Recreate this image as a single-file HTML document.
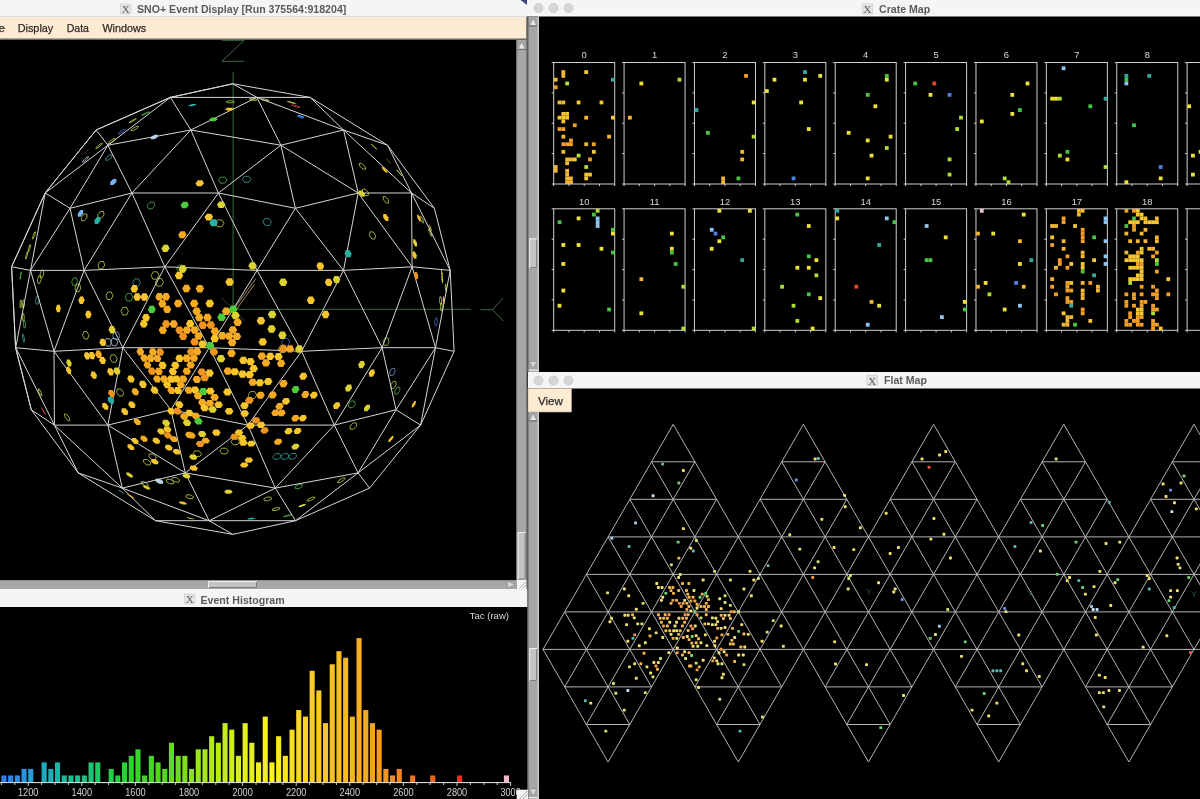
<!DOCTYPE html><html><head><meta charset="utf-8"><style>html,body{margin:0;padding:0;background:#000;width:1200px;height:799px;overflow:hidden}</style></head><body><svg width="1200" height="799" viewBox="0 0 1200 799" style="display:block;will-change:transform">
<rect width="1200" height="799" fill="#000"/>
<rect x="0" y="0" width="527" height="17" fill="#f5f5f5"/>
<rect x="0" y="16" width="527" height="1" fill="#dcdcdc"/>
<rect x="120.6" y="4" width="10.5" height="10" fill="#e4e4e4" stroke="#cfcfcf" stroke-width="0.7"/>
<text x="125.85" y="13" text-anchor="middle" font-family="Liberation Serif, serif" font-size="11" fill="#5c5c5c">X</text>
<text x="137" y="12.6" font-family='"Liberation Sans", sans-serif' font-weight="bold" font-size="10.6" fill="#5a5a5a">SNO+ Event Display [Run 375564:918204]</text>
<rect x="0" y="17" width="527" height="22" fill="#fdebd3"/>
<rect x="0" y="38.5" width="527" height="1.5" fill="#6d655c"/>
<text y="32" font-family='"Liberation Sans", sans-serif' font-size="11.6" fill="#2e2a26"></text>
<text x="-13" y="32" textLength="18" font-family='"Liberation Sans", sans-serif' font-size="11.6" fill="#2e2a26" stroke="#2e2a26" stroke-width="0.25">File</text><text x="17.7" y="32" textLength="35.6" lengthAdjust="spacingAndGlyphs" font-family='"Liberation Sans", sans-serif' font-size="11.6" fill="#2e2a26" stroke="#2e2a26" stroke-width="0.25">Display</text><text x="66.7" y="32" textLength="22.3" lengthAdjust="spacingAndGlyphs" font-family='"Liberation Sans", sans-serif' font-size="11.6" fill="#2e2a26" stroke="#2e2a26" stroke-width="0.25">Data</text><text x="102.4" y="32" textLength="43.8" lengthAdjust="spacingAndGlyphs" font-family='"Liberation Sans", sans-serif' font-size="11.6" fill="#2e2a26" stroke="#2e2a26" stroke-width="0.25">Windows</text>
<clipPath id="spclip"><rect x="0" y="40" width="516.5" height="540"/></clipPath><g clip-path="url(#spclip)">
<path d="M221.7,40.3H244.2L221.7,61.3H244.2" stroke="#3c6a42" stroke-width="1" fill="none"/>
<path d="M233.1,72V309.3H471M480.5,309.7H492.5L503.3,298M492.5,309.7L503.3,321" stroke="#3c6a42" stroke-width="1" fill="none"/>
<path d="M221.7,298L244.5,320.7" stroke="#2c4a30" stroke-width="1" fill="none"/>
<path d="M233.6,309.5L255.8,278.6M235.6,310.5L254.6,284.2" stroke="#c8aa78" stroke-width="0.8" fill="none"/>
<path d="M176.7,268.8L179.0,265.1L183.2,265.1L185.1,268.8L182.9,272.4L178.7,272.4Z" fill="none" stroke="#48a848" stroke-width="0.85"/>
<path d="M151.1,275.5L153.3,271.8L157.3,271.8L159.1,275.5L156.9,279.2L152.9,279.2Z" fill="none" stroke="#b4c440" stroke-width="0.85"/>
<path d="M155.4,282.3L157.6,278.6L161.6,278.6L163.5,282.3L161.3,286.0L157.3,286.0Z" fill="none" stroke="#b4c440" stroke-width="0.85"/>
<path d="M132.7,282.6L134.8,278.9L138.7,278.9L140.4,282.6L138.3,286.3L134.4,286.3Z" fill="none" stroke="#389890" stroke-width="0.85"/>
<path d="M125.3,297.3L127.3,293.5L131.1,293.5L132.9,297.3L130.9,301.0L127.1,301.0Z" fill="none" stroke="#48a848" stroke-width="0.85"/>
<path d="M105.9,295.8L107.8,292.0L111.3,292.0L112.9,295.8L111.0,299.5L107.5,299.5Z" fill="none" stroke="#b4c440" stroke-width="0.85"/>
<path d="M121.0,311.2L122.8,307.4L126.5,307.4L128.4,311.2L126.6,314.9L122.8,314.9Z" fill="none" stroke="#b4c440" stroke-width="0.85"/>
<path d="M97.9,265.1L100.1,261.5L103.5,261.5L104.7,265.1L102.5,268.8L99.1,268.8Z" fill="none" stroke="#b4c440" stroke-width="0.85"/>
<path d="M71.7,281.6L73.5,277.9L76.4,277.9L77.5,281.6L75.7,285.3L72.8,285.3Z" fill="none" stroke="#48a848" stroke-width="0.85"/>
<path d="M74.9,287.9L76.6,284.2L79.6,284.2L80.8,287.9L79.1,291.6L76.1,291.6Z" fill="none" stroke="#b4c440" stroke-width="0.85"/>
<path d="M82.6,335.3L83.8,331.6L87.0,331.6L88.8,335.3L87.6,339.0L84.5,339.0Z" fill="none" stroke="#b4c440" stroke-width="0.85"/>
<path d="M112.6,335.8L114.2,332.0L117.8,332.0L119.9,335.8L118.3,339.5L114.7,339.5Z" fill="none" stroke="#6890c0" stroke-width="0.85"/>
<path d="M110.7,342.0L112.2,338.3L115.7,338.3L117.9,342.0L116.4,345.7L112.8,345.7Z" fill="none" stroke="#a0b8d0" stroke-width="0.85"/>
<path d="M104.6,342.4L106.0,338.7L109.5,338.7L111.6,342.4L110.2,346.1L106.7,346.1Z" fill="none" stroke="#a0b8d0" stroke-width="0.85"/>
<path d="M110.0,358.5L111.3,354.9L114.9,354.9L117.2,358.5L115.9,362.2L112.3,362.2Z" fill="none" stroke="#b4c440" stroke-width="0.85"/>
<path d="M116.5,392.5L117.5,389.0L121.0,389.0L123.6,392.5L122.7,396.0L119.1,396.0Z" fill="none" stroke="#b4c440" stroke-width="0.85"/>
<path d="M281.5,342.1L283.7,338.4L287.9,338.4L289.9,342.1L287.6,345.8L283.4,345.8Z" fill="none" stroke="#4060b0" stroke-width="0.85"/>
<path d="M278.5,348.9L280.8,345.2L285.0,345.2L286.9,348.9L284.6,352.5L280.4,352.5Z" fill="none" stroke="#b4c440" stroke-width="0.85"/>
<path d="M248.1,395.1L250.4,391.6L254.7,391.6L256.7,395.1L254.4,398.5L250.1,398.5Z" fill="none" stroke="#b4c440" stroke-width="0.85"/>
<path d="M348.4,404.4L351.1,401.0L354.5,401.0L355.2,404.4L352.5,407.7L349.1,407.7Z" fill="none" stroke="#48a848" stroke-width="0.85"/>
<path d="M350.0,426.1L353.0,422.9L356.2,422.9L356.5,426.1L353.5,429.2L350.3,429.2Z" fill="none" stroke="#b4c440" stroke-width="0.85"/>
<path d="M288.7,456.3L291.7,453.5L295.7,453.5L296.7,456.3L293.7,459.0L289.8,459.0Z" fill="none" stroke="#389890" stroke-width="0.85"/>
<path d="M280.8,456.5L283.7,453.7L287.8,453.7L289.0,456.5L286.1,459.2L282.0,459.2Z" fill="none" stroke="#389890" stroke-width="0.85"/>
<path d="M272.8,456.5L275.6,453.7L279.8,453.7L281.1,456.5L278.3,459.2L274.2,459.2Z" fill="none" stroke="#389890" stroke-width="0.85"/>
<path d="M230.9,441.7L233.1,438.8L237.5,438.8L239.6,441.7L237.4,444.7L233.1,444.7Z" fill="none" stroke="#b4c440" stroke-width="0.85"/>
<path d="M219.8,451.0L221.8,448.2L226.1,448.2L228.4,451.0L226.4,453.9L222.1,453.9Z" fill="none" stroke="#b4c440" stroke-width="0.85"/>
<path d="M193.2,453.6L194.7,450.9L198.9,450.9L201.6,453.6L200.0,456.4L195.8,456.4Z" fill="none" stroke="#b4c440" stroke-width="0.85"/>
<path d="M295.2,486.5L298.7,484.3L302.3,484.3L302.4,486.5L299.0,488.6L295.3,488.6Z" fill="none" stroke="#48a848" stroke-width="0.85"/>
<path d="M148.8,456.8L149.3,454.0L153.0,454.0L156.2,456.8L155.7,459.5L151.9,459.5Z" fill="none" stroke="#b4c440" stroke-width="0.85"/>
<path d="M143.5,462.2L143.7,459.6L147.3,459.6L150.6,462.2L150.3,464.9L146.8,464.9Z" fill="none" stroke="#b4c440" stroke-width="0.85"/>
<path d="M171.8,479.8L172.4,477.5L176.3,477.5L179.6,479.8L178.9,482.1L175.0,482.1Z" fill="none" stroke="#b4c440" stroke-width="0.85"/>
<path d="M166.3,481.6L166.7,479.4L170.5,479.4L173.9,481.6L173.4,483.8L169.7,483.8Z" fill="none" stroke="#b4c440" stroke-width="0.85"/>
<path d="M155.7,481.2L155.8,479.0L159.4,479.0L162.8,481.2L162.8,483.4L159.2,483.4Z" fill="none" stroke="#b4c440" stroke-width="0.85"/>
<path d="M141.7,483.9L141.1,481.7L144.1,481.7L147.8,483.9L148.4,486.1L145.3,486.1Z" fill="none" stroke="#b4c440" stroke-width="0.85"/>
<path d="M28.5,248.3L29.9,244.7L30.6,244.7L30.0,248.3L28.6,251.9L27.9,251.9Z" fill="none" stroke="#b4c440" stroke-width="0.85"/>
<path d="M26.1,255.4L27.3,251.8L27.9,251.8L27.3,255.4L26.1,259.0L25.5,259.0Z" fill="none" stroke="#b4c440" stroke-width="0.85"/>
<path d="M40.1,273.9L41.5,270.2L43.4,270.2L43.8,273.9L42.3,277.5L40.4,277.5Z" fill="none" stroke="#b4c440" stroke-width="0.85"/>
<path d="M37.5,279.6L38.8,275.9L40.6,275.9L41.1,279.6L39.7,283.3L37.9,283.3Z" fill="none" stroke="#b4c440" stroke-width="0.85"/>
<path d="M20.4,275.5L21.1,271.8L21.4,271.8L20.9,275.5L20.2,279.2L20.0,279.2Z" fill="none" stroke="#48a848" stroke-width="0.85"/>
<path d="M35.5,300.4L36.5,296.6L38.3,296.6L39.1,300.4L38.0,304.1L36.2,304.1Z" fill="none" stroke="#389890" stroke-width="0.85"/>
<path d="M22.4,303.9L23.0,300.2L24.0,300.2L24.4,303.9L23.8,307.7L22.8,307.7Z" fill="none" stroke="#b4c440" stroke-width="0.85"/>
<path d="M20.0,303.9L20.4,300.1L21.1,300.1L21.4,303.9L21.0,307.6L20.2,307.6Z" fill="none" stroke="#b4c440" stroke-width="0.85"/>
<path d="M22.4,317.2L22.7,313.5L23.7,313.5L24.3,317.2L24.0,321.0L23.0,321.0Z" fill="none" stroke="#b4c440" stroke-width="0.85"/>
<path d="M23.4,324.2L23.7,320.5L24.7,320.5L25.5,324.2L25.2,328.0L24.2,328.0Z" fill="none" stroke="#48a848" stroke-width="0.85"/>
<path d="M22.7,338.1L22.6,334.4L23.4,334.4L24.3,338.1L24.4,341.8L23.6,341.8Z" fill="none" stroke="#389890" stroke-width="0.85"/>
<path d="M39.0,392.4L38.1,388.9L39.2,388.9L41.1,392.4L42.0,395.8L41.0,395.8Z" fill="none" stroke="#b4c440" stroke-width="0.85"/>
<path d="M65.2,417.3L64.4,414.1L66.4,414.1L69.1,417.3L69.8,420.6L67.8,420.6Z" fill="none" stroke="#b4c440" stroke-width="0.85"/>
<path d="M43.3,410.8L41.5,407.5L41.6,407.5L43.4,410.8L45.1,414.1L45.1,414.1Z" fill="none" stroke="#c04030" stroke-width="0.85"/>
<path d="M308.3,499.0L312.3,497.2L315.0,497.2L313.8,499.0L309.9,500.8L307.1,500.8Z" fill="none" stroke="#b4c440" stroke-width="0.85"/>
<path d="M263.7,498.9L266.8,497.1L270.9,497.1L271.8,498.9L268.6,500.7L264.5,500.7Z" fill="none" stroke="#b4c440" stroke-width="0.85"/>
<path d="M272.4,509.1L276.1,507.7L279.7,507.7L279.6,509.1L275.9,510.5L272.3,510.5Z" fill="none" stroke="#b4c440" stroke-width="0.85"/>
<path d="M285.9,515.6L290.1,514.6L291.9,514.6L289.5,515.6L285.3,516.6L283.5,516.6Z" fill="none" stroke="#48a848" stroke-width="0.85"/>
<path d="M185.7,496.8L186.4,494.9L190.3,494.9L193.6,496.8L193.0,498.6L189.0,498.6Z" fill="none" stroke="#b4c440" stroke-width="0.85"/>
<path d="M373.9,146.6L371.0,144.1L371.0,144.1L373.9,146.6L376.7,149.1L376.7,149.1Z" fill="none" stroke="#b4c440" stroke-width="0.85"/>
<path d="M290.3,102.5L287.3,101.4L288.3,101.4L292.3,102.5L295.3,103.5L294.3,103.5Z" fill="none" stroke="#b4c440" stroke-width="0.85"/>
<path d="M261.9,99.9L261.2,99.0L264.5,99.0L268.5,99.9L269.2,100.7L265.9,100.7Z" fill="none" stroke="#b4c440" stroke-width="0.85"/>
<path d="M249.2,99.5L249.7,98.6L253.6,98.6L257.1,99.5L256.6,100.3L252.7,100.3Z" fill="none" stroke="#b4c440" stroke-width="0.85"/>
<path d="M293.8,106.2L291.7,105.0L293.8,105.0L297.9,106.2L300.0,107.5L297.9,107.5Z" fill="none" stroke="#c04030" stroke-width="0.85"/>
<path d="M399.0,172.8L396.8,169.9L396.9,169.9L399.4,172.8L401.7,175.7L401.5,175.7Z" fill="none" stroke="#b4c440" stroke-width="0.85"/>
<path d="M359.8,166.3L359.1,163.5L361.7,163.5L365.0,166.3L365.7,169.1L363.1,169.1Z" fill="none" stroke="#b4c440" stroke-width="0.85"/>
<path d="M362.4,192.3L362.4,189.2L365.3,189.2L368.3,192.3L368.3,195.5L365.3,195.5Z" fill="none" stroke="#b4c440" stroke-width="0.85"/>
<path d="M383.5,199.8L383.1,196.6L385.5,196.6L388.3,199.8L388.7,203.0L386.2,203.0Z" fill="none" stroke="#b4c440" stroke-width="0.85"/>
<path d="M420.5,219.4L419.6,216.0L420.7,216.0L422.8,219.4L423.7,222.8L422.6,222.8Z" fill="none" stroke="#b4c440" stroke-width="0.85"/>
<path d="M429.4,232.6L428.5,229.1L429.3,229.1L431.0,232.6L431.9,236.1L431.1,236.1Z" fill="none" stroke="#b4c440" stroke-width="0.85"/>
<path d="M369.4,235.4L370.0,231.9L373.2,231.9L375.6,235.4L374.9,238.9L371.8,238.9Z" fill="none" stroke="#b4c440" stroke-width="0.85"/>
<path d="M242.4,179.3L244.3,176.3L248.7,176.3L251.0,179.3L249.0,182.3L244.7,182.3Z" fill="none" stroke="#389890" stroke-width="0.85"/>
<path d="M218.4,180.2L220.7,177.2L225.0,177.2L227.0,180.2L224.7,183.2L220.4,183.2Z" fill="none" stroke="#48a848" stroke-width="0.85"/>
<path d="M262.9,222.0L264.7,218.6L269.0,218.6L271.4,222.0L269.5,225.4L265.2,225.4Z" fill="none" stroke="#389890" stroke-width="0.85"/>
<path d="M215.3,223.3L217.6,219.9L221.9,219.9L224.0,223.3L221.7,226.7L217.4,226.7Z" fill="none" stroke="#b4c440" stroke-width="0.85"/>
<path d="M226.0,101.8L228.3,100.8L232.6,100.8L234.6,101.8L232.3,102.8L228.0,102.8Z" fill="none" stroke="#90bc3c" stroke-width="0.85"/>
<path d="M106.3,157.6L109.8,154.9L112.3,154.9L111.4,157.6L108.0,160.2L105.5,160.2Z" fill="none" stroke="#389890" stroke-width="0.85"/>
<path d="M147.1,205.5L149.8,202.3L153.7,202.3L154.9,205.5L152.2,208.8L148.3,208.8Z" fill="none" stroke="#48a848" stroke-width="0.85"/>
<path d="M97.7,214.9L100.4,211.5L103.5,211.5L104.0,214.9L101.3,218.3L98.1,218.3Z" fill="none" stroke="#b4c440" stroke-width="0.85"/>
<path d="M81.4,217.4L84.1,214.0L86.9,214.0L87.0,217.4L84.4,220.7L81.6,220.7Z" fill="none" stroke="#b4c440" stroke-width="0.85"/>
<path d="M144.5,113.6L148.4,112.0L149.4,112.0L146.6,113.6L142.7,115.1L141.7,115.1Z" fill="none" stroke="#48a848" stroke-width="0.85"/>
<path d="M132.4,128.5L136.2,126.5L138.6,126.5L137.1,128.5L133.3,130.5L131.0,130.5Z" fill="none" stroke="#b4c440" stroke-width="0.85"/>
<path d="M131.6,120.7L135.3,118.8L136.4,118.8L133.8,120.7L130.1,122.5L129.0,122.5Z" fill="none" stroke="#b4c440" stroke-width="0.85"/>
<path d="M120.1,131.5L123.8,129.4L125.5,129.4L123.6,131.5L119.9,133.7L118.1,133.7Z" fill="none" stroke="#4060b0" stroke-width="0.85"/>
<path d="M109.9,141.2L113.5,138.8L115.4,138.8L113.7,141.2L110.1,143.5L108.2,143.5Z" fill="none" stroke="#b4c440" stroke-width="0.85"/>
<path d="M97.7,145.9L101.1,143.4L102.4,143.4L100.3,145.9L96.9,148.3L95.7,148.3Z" fill="none" stroke="#b4c440" stroke-width="0.85"/>
<path d="M84.3,159.4L87.4,156.7L88.7,156.7L86.9,159.4L83.7,162.1L82.4,162.1Z" fill="none" stroke="#a0b8d0" stroke-width="0.85"/>
<path d="M33.1,235.4L34.8,231.9L35.6,231.9L34.7,235.4L33.0,238.9L32.3,238.9Z" fill="none" stroke="#b4c440" stroke-width="0.85"/>
<path d="M445.4,287.8L445.3,284.1L445.7,284.1L446.3,287.8L446.4,291.5L446.0,291.5Z" fill="none" stroke="#b4c440" stroke-width="0.85"/>
<path d="M439.5,300.5L439.9,296.8L441.0,296.8L441.7,300.5L441.3,304.2L440.2,304.2Z" fill="none" stroke="#b4c440" stroke-width="0.85"/>
<path d="M440.3,306.9L440.8,303.1L441.9,303.1L442.4,306.9L441.9,310.6L440.9,310.6Z" fill="none" stroke="#b4c440" stroke-width="0.85"/>
<path d="M434.7,321.8L435.6,318.0L437.0,318.0L437.4,321.8L436.5,325.5L435.1,325.5Z" fill="none" stroke="#4060b0" stroke-width="0.85"/>
<path d="M383.1,341.7L385.0,338.0L388.0,338.0L389.1,341.7L387.2,345.4L384.2,345.4Z" fill="none" stroke="#90bc3c" stroke-width="0.85"/>
<path d="M389.6,371.9L391.8,368.4L394.6,368.4L395.1,371.9L392.9,375.5L390.1,375.5Z" fill="none" stroke="#6890c0" stroke-width="0.85"/>
<path d="M390.8,384.9L393.2,381.4L395.8,381.4L396.1,384.9L393.7,388.4L391.1,388.4Z" fill="none" stroke="#b4c440" stroke-width="0.85"/>
<path d="M394.9,390.5L397.3,387.0L399.7,387.0L399.8,390.5L397.4,394.0L394.9,394.0Z" fill="none" stroke="#48a848" stroke-width="0.85"/>
<path d="M339.0,480.2L342.7,477.9L345.1,477.9L343.8,480.2L340.1,482.5L337.7,482.5Z" fill="none" stroke="#b4c440" stroke-width="0.85"/>
<path d="M232.8,83.8L256.9,97.4M256.9,97.4L310.2,97.4M232.8,83.8L310.2,97.4M256.9,97.4L343.6,130.0M310.2,97.4L343.6,130.0M343.6,130.0L387.5,145.2M310.2,97.4L387.5,145.2M343.6,130.0L411.5,193.0M387.5,145.2L411.5,193.0M411.5,193.0L434.4,208.3M387.5,145.2L434.4,208.3M256.9,97.4L280.9,145.2M343.6,130.0L280.9,145.2M280.9,145.2L358.2,193.0M343.6,130.0L358.2,193.0M411.5,193.0L358.2,193.0M280.9,145.2L295.4,208.3M358.2,193.0L295.4,208.3M295.4,208.3L343.5,270.4M358.2,193.0L343.5,270.4M343.5,270.4L412.1,266.8M358.2,193.0L412.1,266.8M411.5,193.0L412.1,266.8M412.1,266.8L450.2,270.4M411.5,193.0L450.2,270.4M434.4,208.3L450.2,270.4M343.5,270.4L382.1,347.7M412.1,266.8L382.1,347.7M382.1,347.7L435.5,347.7M412.1,266.8L435.5,347.7M450.2,270.4L435.5,347.7M382.1,347.7L396.1,409.8M435.5,347.7L396.1,409.8M396.1,409.8L420.6,425.1M435.5,347.7L420.6,425.1M420.6,425.1L454.1,351.3M435.5,347.7L454.1,351.3M450.2,270.4L454.1,351.3M232.8,534.4L295.5,520.7M295.5,520.7L369.6,488.1M369.6,488.1L358.1,472.9M295.5,520.7L358.1,472.9M420.6,425.1L369.6,488.1M420.6,425.1L358.1,472.9M396.1,409.8L358.1,472.9M232.8,83.8L170.2,97.4M15.5,347.7L31.3,409.8M232.8,534.4L155.5,520.7M155.5,520.7L78.2,472.9M31.3,409.8L78.2,472.9M170.2,97.4L170.4,97.4M232.8,83.8L170.4,97.4M170.2,97.4L96.1,130.0M170.4,97.4L96.1,130.0M96.1,130.0L107.9,145.2M170.4,97.4L107.9,145.2M96.1,130.0L45.2,193.0M107.9,145.2L45.2,193.0M45.2,193.0L70.0,208.3M107.9,145.2L70.0,208.3M96.1,130.0L45.1,193.0M45.2,193.0L45.1,193.0M45.1,193.0L11.6,266.8M45.2,193.0L11.6,266.8M11.6,266.8L30.5,270.4M45.2,193.0L30.5,270.4M70.0,208.3L30.5,270.4M15.5,347.7L11.6,266.8M15.5,347.7L15.7,347.7M11.6,266.8L15.7,347.7M30.5,270.4L15.7,347.7M31.3,409.8L15.7,347.7M31.3,409.8L54.4,425.1M15.7,347.7L54.4,425.1M54.4,425.1L54.0,351.3M15.7,347.7L54.0,351.3M30.5,270.4L54.0,351.3M54.0,351.3L84.1,270.4M30.5,270.4L84.1,270.4M70.0,208.3L84.1,270.4M54.4,425.1L107.9,425.1M54.0,351.3L107.9,425.1M107.9,425.1L122.8,347.7M54.0,351.3L122.8,347.7M84.1,270.4L122.8,347.7M107.9,425.1L170.9,409.8M122.8,347.7L170.9,409.8M232.8,534.4L209.1,520.7M155.5,520.7L209.1,520.7M209.1,520.7L122.3,488.1M155.5,520.7L122.3,488.1M78.2,472.9L122.3,488.1M54.4,425.1L122.3,488.1M78.2,472.9L54.4,425.1M209.1,520.7L185.3,472.9M122.3,488.1L185.3,472.9M107.9,425.1L185.3,472.9M107.9,425.1L122.3,488.1M170.9,409.8L185.3,472.9M256.9,97.4L170.4,97.4M170.4,97.4L190.8,130.0M256.9,97.4L190.8,130.0M280.9,145.2L190.8,130.0M190.8,130.0L218.4,193.0M280.9,145.2L218.4,193.0M295.4,208.3L218.4,193.0M107.9,145.2L190.8,130.0M107.9,145.2L131.9,193.0M190.8,130.0L131.9,193.0M218.4,193.0L131.9,193.0M70.0,208.3L131.9,193.0M84.1,270.4L131.9,193.0M84.1,270.4L164.8,266.8M131.9,193.0L164.8,266.8M218.4,193.0L164.8,266.8M164.8,266.8L257.1,270.4M218.4,193.0L257.1,270.4M295.4,208.3L257.1,270.4M122.8,347.7L164.8,266.8M122.8,347.7L209.3,347.7M164.8,266.8L209.3,347.7M257.1,270.4L209.3,347.7M170.9,409.8L209.3,347.7M170.9,409.8L247.9,425.1M209.3,347.7L247.9,425.1M247.9,425.1L301.6,351.3M209.3,347.7L301.6,351.3M257.1,270.4L301.6,351.3M343.5,270.4L301.6,351.3M343.5,270.4L257.1,270.4M247.9,425.1L334.3,425.1M301.6,351.3L334.3,425.1M382.1,347.7L334.3,425.1M382.1,347.7L301.6,351.3M396.1,409.8L334.3,425.1M295.5,520.7L209.1,520.7M295.5,520.7L275.3,488.1M209.1,520.7L275.3,488.1M185.3,472.9L275.3,488.1M247.9,425.1L275.3,488.1M185.3,472.9L247.9,425.1M358.1,472.9L275.3,488.1M358.1,472.9L334.3,425.1M334.3,425.1L275.3,488.1" stroke="#d6d6d6" stroke-width="1" fill="none" stroke-linejoin="round"/>
<path d="M169.6,248.4L167.9,244.8L163.8,244.8L161.4,248.4L163.1,252.0L167.2,252.0Z" fill="#dcd232"/>
<path d="M186.9,269.0L185.0,265.3L180.8,265.3L178.5,269.0L180.4,272.7L184.6,272.7Z" fill="#dcd232"/>
<path d="M183.2,275.5L181.3,271.8L177.1,271.8L174.8,275.5L176.8,279.2L181.0,279.2Z" fill="#f7c52c"/>
<path d="M190.6,288.5L188.6,284.7L184.4,284.7L182.2,288.5L184.2,292.2L188.4,292.2Z" fill="#f5aa24"/>
<path d="M204.1,288.6L202.0,284.9L197.8,284.9L195.6,288.6L197.7,292.4L201.9,292.4Z" fill="#f5aa24"/>
<path d="M138.2,288.7L136.4,284.9L132.6,284.9L130.5,288.7L132.3,292.4L136.1,292.4Z" fill="#f7c52c"/>
<path d="M141.1,297.0L139.3,293.3L135.4,293.3L133.4,297.0L135.2,300.8L139.1,300.8Z" fill="#f7c52c"/>
<path d="M148.3,297.0L146.4,293.2L142.5,293.2L140.4,297.0L142.3,300.7L146.2,300.7Z" fill="#f7c52c"/>
<path d="M163.4,296.9L161.5,293.1L157.4,293.1L155.3,296.9L157.3,300.6L161.3,300.6Z" fill="#f5aa24"/>
<path d="M170.1,296.9L168.1,293.1L164.0,293.1L161.9,296.9L163.9,300.6L168.0,300.6Z" fill="#f5aa24"/>
<path d="M166.4,303.8L164.4,300.1L160.3,300.1L158.3,303.8L160.3,307.6L164.4,307.6Z" fill="#f5aa24"/>
<path d="M182.3,303.5L180.2,299.7L176.0,299.7L173.9,303.5L176.0,307.2L180.1,307.2Z" fill="#f5aa24"/>
<path d="M198.4,303.5L196.3,299.8L192.1,299.8L189.9,303.5L192.0,307.2L196.3,307.2Z" fill="#f5aa24"/>
<path d="M155.8,309.4L153.8,305.7L149.8,305.7L147.8,309.4L149.8,313.1L153.8,313.1Z" fill="#4ccc3c"/>
<path d="M171.3,309.4L169.2,305.7L165.1,305.7L163.1,309.4L165.1,313.1L169.2,313.1Z" fill="#f5aa24"/>
<path d="M201.0,311.2L198.8,307.5L194.6,307.5L192.4,311.2L194.6,315.0L198.8,315.0Z" fill="#f5aa24"/>
<path d="M150.0,317.6L147.9,313.9L144.0,313.9L142.1,317.6L144.1,321.4L148.1,321.4Z" fill="#f7c52c"/>
<path d="M147.7,323.9L145.6,320.1L141.7,320.1L139.8,323.9L141.9,327.6L145.8,327.6Z" fill="#f7c52c"/>
<path d="M170.2,324.0L168.1,320.2L164.0,320.2L162.0,324.0L164.1,327.7L168.2,327.7Z" fill="#f09420"/>
<path d="M177.9,324.0L175.7,320.2L171.6,320.2L169.6,324.0L171.7,327.7L175.9,327.7Z" fill="#f5aa24"/>
<path d="M194.4,323.9L192.2,320.1L188.0,320.1L185.9,323.9L188.1,327.6L192.3,327.6Z" fill="#f7c52c"/>
<path d="M203.5,317.6L201.4,313.8L197.1,313.8L195.0,317.6L197.1,321.3L201.4,321.3Z" fill="#f5aa24"/>
<path d="M166.9,330.2L164.7,326.5L160.6,326.5L158.7,330.2L160.9,333.9L164.9,333.9Z" fill="#f5aa24"/>
<path d="M183.7,330.1L181.5,326.4L177.3,326.4L175.3,330.1L177.5,333.9L181.7,333.9Z" fill="#f09420"/>
<path d="M191.2,330.1L189.0,326.4L184.7,326.4L182.7,330.1L184.9,333.8L189.1,333.8Z" fill="#f5aa24"/>
<path d="M198.8,330.0L196.6,326.3L192.4,326.3L190.3,330.0L192.5,333.7L196.8,333.7Z" fill="#f5aa24"/>
<path d="M187.3,336.2L185.1,332.5L180.9,332.5L178.9,336.2L181.1,339.9L185.3,339.9Z" fill="#f09420"/>
<path d="M202.9,336.0L200.6,332.2L196.4,332.2L194.3,336.0L196.5,339.7L200.8,339.7Z" fill="#f5aa24"/>
<path d="M198.8,341.9L196.6,338.2L192.3,338.2L190.3,341.9L192.5,345.6L196.8,345.6Z" fill="#f09420"/>
<path d="M84.6,300.3L83.1,296.6L80.1,296.6L78.4,300.3L79.8,304.1L82.9,304.1Z" fill="#f7c52c"/>
<path d="M60.8,308.5L59.6,304.7L57.0,304.7L55.8,308.5L57.0,312.2L59.6,312.2Z" fill="#f7c52c"/>
<path d="M91.6,314.5L89.9,310.7L86.7,310.7L85.2,314.5L86.8,318.2L90.0,318.2Z" fill="#f7c52c"/>
<path d="M115.6,329.7L113.6,326.0L110.1,326.0L108.5,329.7L110.5,333.5L114.0,333.5Z" fill="#dcd232"/>
<path d="M106.2,342.4L104.1,338.7L100.7,338.7L99.4,342.4L101.4,346.1L104.8,346.1Z" fill="#f7c52c"/>
<path d="M90.1,355.8L88.0,352.2L84.9,352.2L83.9,355.8L86.0,359.5L89.1,359.5Z" fill="#f7c52c"/>
<path d="M95.2,355.6L93.0,351.9L89.8,351.9L88.7,355.6L90.9,359.2L94.1,359.2Z" fill="#f7c52c"/>
<path d="M101.9,354.2L99.8,350.5L96.4,350.5L95.3,354.2L97.4,357.9L100.8,357.9Z" fill="#f5aa24"/>
<path d="M105.9,360.3L103.7,356.7L100.3,356.7L99.1,360.3L101.4,364.0L104.8,364.0Z" fill="#f7c52c"/>
<path d="M71.7,363.0L69.6,359.4L66.9,359.4L66.3,363.0L68.4,366.6L71.1,366.6Z" fill="#dcd232"/>
<path d="M71.3,370.4L69.1,366.8L66.5,366.8L66.1,370.4L68.2,373.9L70.8,373.9Z" fill="#f7c52c"/>
<path d="M97.0,375.2L94.6,371.6L91.4,371.6L90.6,375.2L93.0,378.7L96.2,378.7Z" fill="#f7c52c"/>
<path d="M114.0,371.8L111.6,368.2L108.2,368.2L107.1,371.8L109.5,375.4L112.9,375.4Z" fill="#f7c52c"/>
<path d="M120.6,371.0L118.2,367.4L114.6,367.4L113.4,371.0L115.8,374.6L119.4,374.6Z" fill="#dcd232"/>
<path d="M134.7,378.9L132.2,375.4L128.4,375.4L127.2,378.9L129.7,382.4L133.4,382.4Z" fill="#f7c52c"/>
<path d="M144.3,351.7L142.0,348.0L138.1,348.0L136.5,351.7L138.8,355.4L142.6,355.4Z" fill="#f5aa24"/>
<path d="M156.9,352.0L154.6,348.3L150.6,348.3L148.9,352.0L151.1,355.6L155.1,355.6Z" fill="#f5aa24"/>
<path d="M164.2,352.1L161.9,348.4L157.8,348.4L156.1,352.1L158.3,355.7L162.4,355.7Z" fill="#f09420"/>
<path d="M148.2,358.1L145.9,354.4L141.9,354.4L140.3,358.1L142.7,361.7L146.6,361.7Z" fill="#f5aa24"/>
<path d="M154.6,358.2L152.2,354.6L148.3,354.6L146.6,358.2L148.9,361.9L152.9,361.9Z" fill="#f5aa24"/>
<path d="M161.4,358.4L159.1,354.7L155.0,354.7L153.3,358.4L155.7,362.0L159.7,362.0Z" fill="#f5aa24"/>
<path d="M151.4,365.0L149.0,361.4L145.1,361.4L143.5,365.0L145.9,368.6L149.8,368.6Z" fill="#f5aa24"/>
<path d="M166.7,365.3L164.3,361.7L160.2,361.7L158.5,365.3L160.9,368.9L165.0,368.9Z" fill="#f7c52c"/>
<path d="M179.5,365.3L177.2,361.7L173.0,361.7L171.2,365.3L173.6,368.9L177.7,368.9Z" fill="#f7c52c"/>
<path d="M155.9,371.2L153.4,367.6L149.5,367.6L147.9,371.2L150.3,374.8L154.3,374.8Z" fill="#f09420"/>
<path d="M162.8,371.4L160.4,367.8L156.4,367.8L154.7,371.4L157.2,375.0L161.2,375.0Z" fill="#f5aa24"/>
<path d="M177.0,371.5L174.6,367.9L170.5,367.9L168.8,371.5L171.1,375.0L175.3,375.0Z" fill="#f7c52c"/>
<path d="M183.7,358.4L181.3,354.7L177.2,354.7L175.3,358.4L177.6,362.0L181.8,362.0Z" fill="#f7c52c"/>
<path d="M191.0,358.2L188.7,354.6L184.4,354.6L182.5,358.2L184.8,361.9L189.0,361.9Z" fill="#f5aa24"/>
<path d="M198.1,358.1L195.8,354.4L191.6,354.4L189.6,358.1L191.9,361.7L196.1,361.7Z" fill="#f5aa24"/>
<path d="M195.4,351.8L193.1,348.2L188.9,348.2L186.9,351.8L189.2,355.5L193.4,355.5Z" fill="#f09420"/>
<path d="M201.4,351.7L199.2,348.0L194.9,348.0L192.9,351.7L195.2,355.3L199.4,355.3Z" fill="#f5aa24"/>
<path d="M194.9,365.0L192.6,361.4L188.3,361.4L186.4,365.0L188.7,368.6L193.0,368.6Z" fill="#f5aa24"/>
<path d="M191.0,371.3L188.6,367.7L184.4,367.7L182.6,371.3L184.9,374.8L189.1,374.8Z" fill="#f5aa24"/>
<path d="M122.2,491.7L118.7,489.8L117.8,489.8L120.5,491.7L124.1,493.7L124.9,493.7Z" fill="#2ab0a0"/>
<path d="M131.8,496.1L128.1,494.3L126.9,494.3L129.4,496.1L133.2,498.0L134.3,498.0Z" fill="#f7c52c"/>
<path d="M186.5,503.0L182.9,501.4L179.3,501.4L179.2,503.0L182.9,504.6L186.5,504.6Z" fill="#f7c52c"/>
<path d="M192.9,518.5L188.7,517.6L186.5,517.6L188.5,518.5L192.7,519.3L195.0,519.3Z" fill="#dcd232"/>
<path d="M304.8,505.4L306.1,503.9L303.5,503.9L299.5,505.4L298.1,506.9L300.8,506.9Z" fill="#dcd232"/>
<path d="M255.3,518.5L254.7,517.7L250.7,517.7L247.3,518.5L247.9,519.4L251.9,519.4Z" fill="#2ab0a0"/>
<path d="M256.9,265.9L254.6,262.3L250.3,262.3L248.3,265.9L250.5,269.6L254.8,269.6Z" fill="#dcd232"/>
<path d="M233.9,282.0L231.8,278.3L227.5,278.3L225.3,282.0L227.4,285.7L231.8,285.7Z" fill="#f7c52c"/>
<path d="M287.4,282.2L285.2,278.5L281.0,278.5L279.0,282.2L281.2,285.9L285.4,285.9Z" fill="#dcd232"/>
<path d="M324.2,266.1L322.0,262.4L318.0,262.4L316.4,266.1L318.6,269.7L322.6,269.7Z" fill="#f7c52c"/>
<path d="M351.7,253.7L349.3,250.1L345.7,250.1L344.5,253.7L346.8,257.3L350.4,257.3Z" fill="#2ab0a0"/>
<path d="M332.6,282.4L330.4,278.7L326.6,278.7L324.8,282.4L327.0,286.1L330.8,286.1Z" fill="#f7c52c"/>
<path d="M340.3,279.6L338.2,275.9L334.4,275.9L332.8,279.6L334.9,283.3L338.7,283.3Z" fill="#dcd232"/>
<path d="M314.8,300.2L312.8,296.5L308.7,296.5L306.8,300.2L308.8,304.0L312.9,304.0Z" fill="#f7c52c"/>
<path d="M329.5,314.6L327.6,310.8L323.7,310.8L321.7,314.6L323.6,318.3L327.5,318.3Z" fill="#f7c52c"/>
<path d="M214.1,303.6L212.0,299.8L207.7,299.8L205.5,303.6L207.6,307.3L211.9,307.3Z" fill="#f7c52c"/>
<path d="M230.6,311.2L228.4,307.4L224.1,307.4L221.9,311.2L224.1,314.9L228.4,314.9Z" fill="#f5aa24"/>
<path d="M237.5,309.4L235.4,305.6L231.1,305.6L228.9,309.4L231.1,313.1L235.4,313.1Z" fill="#4ccc3c"/>
<path d="M225.9,317.4L223.7,313.6L219.4,313.6L217.3,317.4L219.4,321.1L223.8,321.1Z" fill="#4ccc3c"/>
<path d="M239.8,315.6L237.6,311.9L233.3,311.9L231.1,315.6L233.3,319.3L237.6,319.3Z" fill="#dcd232"/>
<path d="M211.8,317.5L209.6,313.8L205.3,313.8L203.2,317.5L205.4,321.2L209.7,321.2Z" fill="#f5aa24"/>
<path d="M242.0,322.3L239.8,318.5L235.5,318.5L233.3,322.3L235.5,326.0L239.8,326.0Z" fill="#f5aa24"/>
<path d="M207.1,325.2L204.9,321.4L200.6,321.4L198.5,325.2L200.7,328.9L205.0,328.9Z" fill="#f09420"/>
<path d="M215.1,325.0L212.9,321.3L208.6,321.3L206.5,325.0L208.7,328.8L213.0,328.8Z" fill="#f09420"/>
<path d="M219.2,331.3L217.1,327.6L212.7,327.6L210.6,331.3L212.8,335.1L217.1,335.1Z" fill="#f5aa24"/>
<path d="M226.6,335.8L224.4,332.1L220.1,332.1L218.0,335.8L220.2,339.5L224.5,339.5Z" fill="#f5aa24"/>
<path d="M233.4,336.1L231.2,332.4L226.9,332.4L224.7,336.1L226.9,339.8L231.2,339.8Z" fill="#f5aa24"/>
<path d="M241.2,336.4L239.0,332.7L234.7,332.7L232.5,336.4L234.7,340.1L239.0,340.1Z" fill="#f5aa24"/>
<path d="M237.2,329.9L235.0,326.2L230.7,326.2L228.5,329.9L230.7,333.7L235.0,333.7Z" fill="#f5aa24"/>
<path d="M219.0,338.6L216.8,334.9L212.5,334.9L210.4,338.6L212.6,342.3L216.9,342.3Z" fill="#f7c52c"/>
<path d="M236.4,342.5L234.3,338.8L230.0,338.8L227.8,342.5L230.0,346.2L234.3,346.2Z" fill="#f5aa24"/>
<path d="M206.8,344.2L204.6,340.5L200.3,340.5L198.2,344.2L200.5,347.9L204.7,347.9Z" fill="#f7c52c"/>
<path d="M214.5,345.6L212.3,341.9L208.0,341.9L205.9,345.6L208.1,349.3L212.4,349.3Z" fill="#4ccc3c"/>
<path d="M265.2,320.8L263.1,317.0L258.8,317.0L256.7,320.8L258.8,324.5L263.1,324.5Z" fill="#f7c52c"/>
<path d="M276.4,314.6L274.3,310.8L270.0,310.8L267.9,314.6L270.0,318.3L274.2,318.3Z" fill="#dcd232"/>
<path d="M275.9,328.9L273.8,325.2L269.6,325.2L267.4,328.9L269.4,332.7L273.7,332.7Z" fill="#dcd232"/>
<path d="M286.6,335.3L284.6,331.6L280.4,331.6L278.2,335.3L280.2,339.0L284.4,339.0Z" fill="#dcd232"/>
<path d="M267.0,341.9L264.9,338.2L260.6,338.2L258.4,341.9L260.5,345.6L264.8,345.6Z" fill="#f7c52c"/>
<path d="M287.4,348.9L285.5,345.2L281.3,345.2L279.0,348.9L280.9,352.6L285.1,352.6Z" fill="#f09420"/>
<path d="M294.2,349.0L292.3,345.3L288.1,345.3L285.9,349.0L287.8,352.6L291.9,352.6Z" fill="#f5aa24"/>
<path d="M303.3,349.0L301.5,345.3L297.4,345.3L295.1,349.0L296.9,352.7L301.0,352.7Z" fill="#dcd232"/>
<path d="M218.2,352.0L216.0,348.3L211.7,348.3L209.6,352.0L211.8,355.6L216.1,355.6Z" fill="#f09420"/>
<path d="M235.8,353.3L233.6,349.6L229.3,349.6L227.2,353.3L229.3,356.9L233.7,356.9Z" fill="#f5aa24"/>
<path d="M225.3,358.7L223.1,355.0L218.7,355.0L216.6,358.7L218.8,362.3L223.2,362.3Z" fill="#dcd232"/>
<path d="M247.7,360.3L245.6,356.7L241.3,356.7L239.1,360.3L241.2,364.0L245.5,364.0Z" fill="#f7c52c"/>
<path d="M254.8,361.7L252.7,358.0L248.4,358.0L246.2,361.7L248.3,365.3L252.6,365.3Z" fill="#f7c52c"/>
<path d="M266.1,356.2L264.1,352.5L259.8,352.5L257.6,356.2L259.6,359.8L263.9,359.8Z" fill="#f5aa24"/>
<path d="M274.4,356.5L272.4,352.8L268.2,352.8L265.9,356.5L267.9,360.1L272.1,360.1Z" fill="#f7c52c"/>
<path d="M282.7,356.7L280.7,353.0L276.5,353.0L274.2,356.7L276.2,360.3L280.4,360.3Z" fill="#f7c52c"/>
<path d="M270.3,363.0L268.3,359.3L264.0,359.3L261.7,363.0L263.7,366.6L268.0,366.6Z" fill="#f5aa24"/>
<path d="M285.3,363.4L283.4,359.8L279.2,359.8L276.9,363.4L278.8,367.0L283.0,367.0Z" fill="#f5aa24"/>
<path d="M258.0,368.7L255.9,365.1L251.6,365.1L249.4,368.7L251.4,372.3L255.7,372.3Z" fill="#f7c52c"/>
<path d="M232.2,371.1L230.0,367.5L225.7,367.5L223.5,371.1L225.7,374.7L230.0,374.7Z" fill="#f5aa24"/>
<path d="M239.0,371.7L236.9,368.2L232.6,368.2L230.4,371.7L232.5,375.3L236.9,375.3Z" fill="#f7c52c"/>
<path d="M246.8,374.1L244.7,370.6L240.4,370.6L238.2,374.1L240.3,377.7L244.6,377.7Z" fill="#f7c52c"/>
<path d="M253.9,374.7L251.9,371.1L247.6,371.1L245.3,374.7L247.4,378.2L251.7,378.2Z" fill="#f7c52c"/>
<path d="M206.1,372.0L203.8,368.4L199.5,368.4L197.5,372.0L199.8,375.6L204.1,375.6Z" fill="#f09420"/>
<path d="M213.9,373.1L211.6,369.5L207.3,369.5L205.3,373.1L207.6,376.7L211.8,376.7Z" fill="#f7c52c"/>
<path d="M208.9,377.8L206.6,374.2L202.4,374.2L200.4,377.8L202.7,381.3L207.0,381.3Z" fill="#f09420"/>
<path d="M257.0,382.2L254.9,378.7L250.6,378.7L248.4,382.2L250.4,385.7L254.7,385.7Z" fill="#f5aa24"/>
<path d="M264.1,382.7L262.2,379.2L257.9,379.2L255.6,382.7L257.6,386.2L261.8,386.2Z" fill="#f7c52c"/>
<path d="M272.5,381.4L270.5,377.9L266.3,377.9L263.9,381.4L265.8,384.9L270.1,384.9Z" fill="#f7c52c"/>
<path d="M287.7,383.6L285.9,380.1L281.8,380.1L279.3,383.6L281.1,387.2L285.3,387.2Z" fill="#f5aa24"/>
<path d="M307.3,376.3L305.7,372.7L301.7,372.7L299.2,376.3L300.8,379.8L304.9,379.8Z" fill="#f7c52c"/>
<path d="M365.0,364.6L363.9,361.0L360.5,361.0L358.2,364.6L359.3,368.2L362.7,368.2Z" fill="#dcd232"/>
<path d="M375.0,373.1L374.2,369.6L371.0,369.6L368.6,373.1L369.5,376.7L372.7,376.7Z" fill="#f7c52c"/>
<path d="M161.1,379.0L158.7,375.5L154.7,375.5L153.1,379.0L155.6,382.5L159.6,382.5Z" fill="#f5aa24"/>
<path d="M168.2,379.1L165.7,375.6L161.7,375.6L160.1,379.1L162.5,382.7L166.6,382.7Z" fill="#f5aa24"/>
<path d="M175.3,379.1L172.9,375.6L168.8,375.6L167.1,379.1L169.5,382.7L173.6,382.7Z" fill="#f7c52c"/>
<path d="M180.9,379.1L178.5,375.6L174.4,375.6L172.6,379.1L175.0,382.6L179.2,382.6Z" fill="#f7c52c"/>
<path d="M187.4,379.0L185.0,375.5L180.8,375.5L179.0,379.0L181.4,382.5L185.6,382.5Z" fill="#f5aa24"/>
<path d="M201.1,379.5L198.8,376.0L194.5,376.0L192.6,379.5L195.0,383.1L199.2,383.1Z" fill="#f5aa24"/>
<path d="M114.9,393.5L112.3,390.0L108.9,390.0L108.1,393.5L110.7,396.9L114.1,396.9Z" fill="#f09420"/>
<path d="M114.3,400.2L111.6,396.8L108.2,396.8L107.5,400.2L110.2,403.6L113.6,403.6Z" fill="#2ab0a0"/>
<path d="M108.5,406.4L105.8,403.0L102.5,403.0L102.1,406.4L104.8,409.7L108.0,409.7Z" fill="#f7c52c"/>
<path d="M135.6,404.7L132.9,401.4L129.2,401.4L128.2,404.7L130.9,408.1L134.6,408.1Z" fill="#f7c52c"/>
<path d="M128.3,411.6L125.5,408.3L121.9,408.3L121.2,411.6L124.0,414.9L127.5,414.9Z" fill="#f7c52c"/>
<path d="M139.0,391.7L136.4,388.3L132.7,388.3L131.5,391.7L134.1,395.2L137.8,395.2Z" fill="#f5aa24"/>
<path d="M146.8,384.3L144.3,380.8L140.4,380.8L139.0,384.3L141.6,387.9L145.4,387.9Z" fill="#f7c52c"/>
<path d="M158.5,390.3L155.9,386.8L152.0,386.8L150.5,390.3L153.1,393.8L157.1,393.8Z" fill="#f7c52c"/>
<path d="M171.2,384.7L168.8,381.2L164.7,381.2L163.1,384.7L165.5,388.3L169.6,388.3Z" fill="#f7c52c"/>
<path d="M184.9,384.7L182.5,381.2L178.3,381.2L176.6,384.7L179.0,388.2L183.2,388.2Z" fill="#f5aa24"/>
<path d="M175.5,390.5L173.0,387.0L168.9,387.0L167.3,390.5L169.8,394.0L173.9,394.0Z" fill="#f5aa24"/>
<path d="M182.0,390.5L179.6,387.0L175.4,387.0L173.7,390.5L176.2,393.9L180.3,393.9Z" fill="#f7c52c"/>
<path d="M192.9,390.2L190.5,386.7L186.3,386.7L184.5,390.2L186.9,393.7L191.1,393.7Z" fill="#f5aa24"/>
<path d="M199.4,390.0L197.0,386.5L192.7,386.5L190.9,390.0L193.3,393.5L197.5,393.5Z" fill="#f7c52c"/>
<path d="M202.2,395.8L199.8,392.3L195.5,392.3L193.7,395.8L196.0,399.2L200.3,399.2Z" fill="#f5aa24"/>
<path d="M183.5,404.7L181.0,401.3L176.8,401.3L175.2,404.7L177.7,408.1L181.9,408.1Z" fill="#f7c52c"/>
<path d="M175.3,411.2L172.7,407.9L168.6,407.9L167.2,411.2L169.8,414.5L173.9,414.5Z" fill="#f7c52c"/>
<path d="M181.7,411.1L179.1,407.8L175.0,407.8L173.4,411.1L176.0,414.4L180.2,414.4Z" fill="#f09420"/>
<path d="M193.6,413.0L191.1,409.7L186.9,409.7L185.2,413.0L187.7,416.3L191.9,416.3Z" fill="#f7c52c"/>
<path d="M200.2,416.0L197.7,412.7L193.4,412.7L191.7,416.0L194.2,419.2L198.4,419.2Z" fill="#f5aa24"/>
<path d="M188.3,416.5L185.7,413.3L181.6,413.3L180.0,416.5L182.5,419.8L186.7,419.8Z" fill="#f5aa24"/>
<path d="M191.2,422.7L188.6,419.5L184.4,419.5L182.8,422.7L185.4,425.9L189.6,425.9Z" fill="#dcd232"/>
<path d="M193.4,434.9L190.8,431.8L186.6,431.8L185.1,434.9L187.7,437.9L191.9,437.9Z" fill="#f5aa24"/>
<path d="M141.0,421.8L138.1,418.7L134.4,418.7L133.6,421.8L136.5,425.0L140.2,425.0Z" fill="#f5aa24"/>
<path d="M170.2,422.9L167.5,419.7L163.4,419.7L162.1,422.9L164.9,426.0L168.9,426.0Z" fill="#dcd232"/>
<path d="M165.0,431.4L162.2,428.4L158.2,428.4L157.1,431.4L160.0,434.5L163.9,434.5Z" fill="#f7c52c"/>
<path d="M171.4,429.3L168.7,426.2L164.6,426.2L163.4,429.3L166.2,432.4L170.2,432.4Z" fill="#f7c52c"/>
<path d="M138.6,440.9L135.5,438.0L132.0,438.0L131.5,440.9L134.6,443.9L138.1,443.9Z" fill="#f7c52c"/>
<path d="M147.7,438.8L144.6,435.8L140.9,435.8L140.3,438.8L143.3,441.8L147.0,441.8Z" fill="#f5aa24"/>
<path d="M134.3,447.2L131.1,444.3L127.7,444.3L127.5,447.2L130.7,450.1L134.1,450.1Z" fill="#f7c52c"/>
<path d="M160.2,440.8L157.2,437.8L153.3,437.8L152.4,440.8L155.4,443.7L159.3,443.7Z" fill="#f7c52c"/>
<path d="M171.9,435.4L169.1,432.3L165.1,432.3L163.9,435.4L166.7,438.4L170.8,438.4Z" fill="#f09420"/>
<path d="M178.0,439.2L175.2,436.2L171.1,436.2L169.9,439.2L172.7,442.1L176.7,442.1Z" fill="#f5aa24"/>
<path d="M172.7,447.7L169.8,444.8L165.8,444.8L164.8,447.7L167.7,450.6L171.7,450.6Z" fill="#f7c52c"/>
<path d="M180.8,451.8L177.9,449.0L173.8,449.0L172.7,451.8L175.6,454.6L179.6,454.6Z" fill="#f7c52c"/>
<path d="M158.5,461.7L155.2,459.0L151.5,459.0L151.0,461.7L154.3,464.3L158.0,464.3Z" fill="#f7c52c"/>
<path d="M132.4,475.0L128.8,472.6L126.0,472.6L126.8,475.0L130.3,477.4L133.2,477.4Z" fill="#dcd232"/>
<path d="M162.8,481.1L159.3,478.9L155.8,478.9L155.7,481.1L159.2,483.4L162.7,483.4Z" fill="#b8d4f0"/>
<path d="M149.7,487.5L145.9,485.4L142.9,485.4L143.7,487.5L147.4,489.6L150.4,489.6Z" fill="#dcd232"/>
<path d="M190.5,475.9L187.5,473.5L183.4,473.5L182.4,475.9L185.4,478.2L189.5,478.2Z" fill="#dcd232"/>
<path d="M207.7,391.5L205.3,388.1L201.0,388.1L199.1,391.5L201.5,395.0L205.7,395.0Z" fill="#4ccc3c"/>
<path d="M214.7,391.2L212.4,387.7L208.1,387.7L206.1,391.2L208.4,394.6L212.7,394.6Z" fill="#f7c52c"/>
<path d="M218.9,397.3L216.6,393.9L212.3,393.9L210.3,397.3L212.6,400.7L216.9,400.7Z" fill="#f5aa24"/>
<path d="M206.6,402.5L204.2,399.1L200.0,399.1L198.1,402.5L200.5,405.9L204.7,405.9Z" fill="#f5aa24"/>
<path d="M214.2,403.2L211.9,399.9L207.6,399.9L205.6,403.2L208.0,406.6L212.3,406.6Z" fill="#f5aa24"/>
<path d="M222.9,404.7L220.6,401.4L216.3,401.4L214.3,404.7L216.5,408.1L220.8,408.1Z" fill="#f7c52c"/>
<path d="M208.8,407.9L206.4,404.6L202.1,404.6L200.2,407.9L202.6,411.2L206.9,411.2Z" fill="#f7c52c"/>
<path d="M216.8,409.5L214.5,406.2L210.2,406.2L208.2,409.5L210.6,412.8L214.9,412.8Z" fill="#dcd232"/>
<path d="M231.8,392.1L229.6,388.6L225.3,388.6L223.1,392.1L225.3,395.5L229.7,395.5Z" fill="#f7c52c"/>
<path d="M233.5,411.2L231.3,407.9L226.9,407.9L224.8,411.2L227.0,414.5L231.3,414.5Z" fill="#f7c52c"/>
<path d="M253.7,400.4L251.6,397.0L247.3,397.0L245.0,400.4L247.1,403.8L251.4,403.8Z" fill="#f09420"/>
<path d="M248.8,405.6L246.8,402.3L242.5,402.3L240.2,405.6L242.3,408.9L246.6,408.9Z" fill="#f7c52c"/>
<path d="M249.0,413.5L247.0,410.2L242.6,410.2L240.4,413.5L242.4,416.8L246.7,416.8Z" fill="#f7c52c"/>
<path d="M264.8,395.2L262.9,391.8L258.6,391.8L256.2,395.2L258.2,398.7L262.5,398.7Z" fill="#f5aa24"/>
<path d="M276.9,395.1L275.1,391.6L270.8,391.6L268.4,395.1L270.2,398.5L274.5,398.5Z" fill="#f5aa24"/>
<path d="M290.1,401.2L288.4,397.9L284.3,397.9L281.8,401.2L283.4,404.6L287.6,404.6Z" fill="#f7c52c"/>
<path d="M283.7,406.4L282.0,403.1L277.8,403.1L275.3,406.4L277.0,409.7L281.2,409.7Z" fill="#f5aa24"/>
<path d="M279.6,412.8L277.9,409.5L273.7,409.5L271.2,412.8L272.9,416.1L277.1,416.1Z" fill="#f5aa24"/>
<path d="M285.7,413.0L284.1,409.7L279.9,409.7L277.4,413.0L279.0,416.2L283.2,416.2Z" fill="#f5aa24"/>
<path d="M299.6,389.6L298.0,386.1L293.9,386.1L291.4,389.6L293.0,393.1L297.1,393.1Z" fill="#4ccc3c"/>
<path d="M309.4,394.6L307.9,391.1L303.9,391.1L301.3,394.6L302.8,398.0L306.8,398.0Z" fill="#f5aa24"/>
<path d="M317.8,395.1L316.4,391.7L312.5,391.7L309.9,395.1L311.3,398.5L315.2,398.5Z" fill="#f7c52c"/>
<path d="M299.4,418.3L298.0,415.0L293.9,415.0L291.3,418.3L292.7,421.5L296.7,421.5Z" fill="#f5aa24"/>
<path d="M306.9,418.1L305.6,414.9L301.6,414.9L298.9,418.1L300.2,421.3L304.2,421.3Z" fill="#f7c52c"/>
<path d="M352.1,388.1L351.1,384.6L347.6,384.6L345.0,388.1L346.0,391.6L349.5,391.6Z" fill="#dcd232"/>
<path d="M340.3,405.6L339.4,402.3L335.8,402.3L333.0,405.6L333.9,408.9L337.6,408.9Z" fill="#f7c52c"/>
<path d="M370.1,408.0L369.8,404.7L366.7,404.7L363.9,408.0L364.3,411.3L367.4,411.3Z" fill="#dcd232"/>
<path d="M260.3,420.4L258.4,417.2L254.1,417.2L251.7,420.4L253.6,423.6L257.9,423.6Z" fill="#f09420"/>
<path d="M254.9,425.7L252.9,422.5L248.6,422.5L246.3,425.7L248.2,428.8L252.5,428.8Z" fill="#f7c52c"/>
<path d="M265.3,424.9L263.5,421.7L259.2,421.7L256.8,424.9L258.6,428.0L262.9,428.0Z" fill="#f7c52c"/>
<path d="M268.8,430.4L267.1,427.3L262.8,427.3L260.3,430.4L262.1,433.5L266.3,433.5Z" fill="#f09420"/>
<path d="M202.7,421.3L200.2,418.1L196.0,418.1L194.2,421.3L196.7,424.4L201.0,424.4Z" fill="#4ccc3c"/>
<path d="M220.7,432.6L218.3,429.5L214.0,429.5L212.1,432.6L214.4,435.7L218.7,435.7Z" fill="#f7c52c"/>
<path d="M243.3,432.6L241.2,429.5L236.9,429.5L234.6,432.6L236.7,435.7L241.0,435.7Z" fill="#f7c52c"/>
<path d="M238.7,436.8L236.6,433.8L232.2,433.8L230.1,436.8L232.2,439.8L236.5,439.8Z" fill="#f09420"/>
<path d="M246.5,437.9L244.4,434.9L240.1,434.9L237.8,437.9L239.9,440.9L244.2,440.9Z" fill="#f7c52c"/>
<path d="M247.7,442.7L245.6,439.8L241.3,439.8L239.0,442.7L241.0,445.7L245.4,445.7Z" fill="#f7c52c"/>
<path d="M255.6,443.7L253.7,440.7L249.4,440.7L247.0,443.7L248.9,446.6L253.2,446.6Z" fill="#f7c52c"/>
<path d="M206.4,434.0L203.9,431.0L199.7,431.0L197.9,434.0L200.4,437.1L204.7,437.1Z" fill="#dcd232"/>
<path d="M195.8,435.6L193.2,432.5L189.0,432.5L187.4,435.6L190.0,438.6L194.2,438.6Z" fill="#f5aa24"/>
<path d="M209.9,440.7L207.4,437.7L203.1,437.7L201.4,440.7L203.9,443.6L208.1,443.6Z" fill="#f5aa24"/>
<path d="M204.3,444.0L201.7,441.1L197.5,441.1L195.8,444.0L198.4,447.0L202.6,447.0Z" fill="#f09420"/>
<path d="M292.6,431.2L291.2,428.1L287.1,428.1L284.4,431.2L285.8,434.3L289.9,434.3Z" fill="#f7c52c"/>
<path d="M301.6,431.1L300.4,428.0L296.4,428.0L293.6,431.1L294.8,434.1L298.8,434.1Z" fill="#f7c52c"/>
<path d="M282.3,441.8L280.8,438.8L276.7,438.8L273.9,441.8L275.4,444.7L279.6,444.7Z" fill="#f5aa24"/>
<path d="M299.4,446.6L298.3,443.7L294.3,443.7L291.4,446.6L292.5,449.5L296.5,449.5Z" fill="#dcd232"/>
<path d="M253.1,460.2L251.2,457.5L246.9,457.5L244.5,460.2L246.4,462.8L250.7,462.8Z" fill="#f7c52c"/>
<path d="M248.6,465.0L246.6,462.4L242.3,462.4L239.9,465.0L241.9,467.6L246.2,467.6Z" fill="#f7c52c"/>
<path d="M197.4,457.1L194.7,454.4L190.5,454.4L189.0,457.1L191.8,459.8L196.0,459.8Z" fill="#dcd232"/>
<path d="M197.9,468.1L195.0,465.6L190.9,465.6L189.5,468.1L192.4,470.7L196.5,470.7Z" fill="#f7c52c"/>
<path d="M232.7,491.7L230.5,489.8L226.1,489.8L224.1,491.7L226.4,493.7L230.7,493.7Z" fill="#dcd232"/>
<path d="M195.8,105.1L196.2,103.9L192.7,103.9L188.9,105.1L188.5,106.3L192.0,106.3Z" fill="#2ab0a0"/>
<path d="M233.8,109.2L231.7,107.8L227.4,107.8L225.1,109.2L227.1,110.6L231.4,110.6Z" fill="#f7c52c"/>
<path d="M217.6,119.4L216.1,117.6L211.8,117.6L209.1,119.4L210.6,121.2L214.8,121.2Z" fill="#4ccc3c"/>
<path d="M157.8,137.0L157.9,134.7L154.5,134.7L150.9,137.0L150.8,139.2L154.3,139.2Z" fill="#b8d4f0"/>
<path d="M116.4,182.0L116.4,179.0L113.2,179.0L110.2,182.0L110.2,185.1L113.3,185.1Z" fill="#78b4f0"/>
<path d="M204.0,183.2L202.3,180.2L198.0,180.2L195.5,183.2L197.2,186.2L201.4,186.2Z" fill="#f7c52c"/>
<path d="M83.2,213.5L83.2,210.1L80.5,210.1L77.9,213.5L77.9,216.8L80.5,216.8Z" fill="#78b4f0"/>
<path d="M100.5,220.5L100.0,217.1L96.9,217.1L94.3,220.5L94.8,223.9L97.9,223.9Z" fill="#2ab0a0"/>
<path d="M188.9,205.0L187.3,201.7L183.1,201.7L180.5,205.0L182.2,208.2L186.3,208.2Z" fill="#4ccc3c"/>
<path d="M225.5,204.7L223.5,201.4L219.2,201.4L216.9,204.7L218.9,208.0L223.3,208.0Z" fill="#dcd232"/>
<path d="M213.1,217.1L211.2,213.8L206.9,213.8L204.5,217.1L206.5,220.5L210.8,220.5Z" fill="#f7c52c"/>
<path d="M217.9,222.7L215.9,219.3L211.6,219.3L209.3,222.7L211.3,226.2L215.6,226.2Z" fill="#2ab0a0"/>
<path d="M186.5,234.8L184.8,231.3L180.6,231.3L178.2,234.8L179.9,238.3L184.1,238.3Z" fill="#f5aa24"/>
<path d="M292.5,102.5L288.5,101.5L287.5,101.5L290.6,102.5L294.6,103.6L295.5,103.6Z" fill="#f7c52c"/>
<path d="M295.0,103.1L291.2,102.0L290.7,102.0L294.0,103.1L297.8,104.2L298.3,104.2Z" fill="#2ab0a0"/>
<path d="M303.6,116.5L299.8,114.9L296.7,114.9L297.5,116.5L301.4,118.2L304.5,118.2Z" fill="#3c78e6"/>
<path d="M389.1,161.2L386.4,158.5L386.1,158.5L388.6,161.2L391.3,163.9L391.5,163.9Z" fill="#f7c52c"/>
<path d="M386.4,170.0L383.3,167.1L381.7,167.1L383.1,170.0L386.2,172.8L387.8,172.8Z" fill="#f7c52c"/>
<path d="M416.7,197.3L414.7,194.1L414.6,194.1L416.5,197.3L418.5,200.5L418.6,200.5Z" fill="#f7c52c"/>
<path d="M364.8,193.6L361.9,190.4L358.8,190.4L358.7,193.6L361.7,196.7L364.7,196.7Z" fill="#dcd232"/>
<path d="M388.5,217.5L385.9,214.1L383.2,214.1L383.2,217.5L385.7,220.9L388.4,220.9Z" fill="#f7c52c"/>
<path d="M420.2,218.2L418.1,214.8L416.8,214.8L417.6,218.2L419.8,221.6L421.1,221.6Z" fill="#f7c52c"/>
<path d="M431.0,227.8L429.3,224.4L428.8,224.4L429.9,227.8L431.6,231.3L432.1,231.3Z" fill="#f7c52c"/>
<path d="M86.6,151.5L89.3,149.0L89.1,149.0L86.3,151.5L83.6,154.1L83.8,154.1Z" fill="#f7c52c"/>
<path d="M417.0,242.8L415.0,239.2L413.1,239.2L413.1,242.8L415.1,246.4L417.1,246.4Z" fill="#dcd232"/>
<path d="M416.7,255.2L414.8,251.6L412.7,251.6L412.4,255.2L414.3,258.8L416.4,258.8Z" fill="#f7c52c"/>
<path d="M418.3,275.6L416.7,271.9L414.5,271.9L414.0,275.6L415.5,279.3L417.7,279.3Z" fill="#f09420"/>
<path d="M442.7,273.8L441.7,270.1L441.0,270.1L441.2,273.8L442.2,277.5L442.9,277.5Z" fill="#dcd232"/>
<path d="M443.0,279.6L442.1,275.9L441.3,275.9L441.4,279.6L442.3,283.3L443.1,283.3Z" fill="#dcd232"/>
<path d="M444.5,300.4L443.9,296.6L443.1,296.6L442.8,300.4L443.4,304.1L444.2,304.1Z" fill="#f7c52c"/>
<path d="M415.3,404.3L416.1,400.9L414.6,400.9L412.3,404.3L411.5,407.6L413.0,407.6Z" fill="#f7c52c"/>
<path d="M392.6,439.0L393.8,436.0L392.2,436.0L389.2,439.0L388.0,442.0L389.7,442.0Z" fill="#f7c52c"/>
<path d="M398.1,446.8L400.5,443.9L400.4,443.9L397.9,446.8L395.6,449.7L395.7,449.7Z" fill="#f7c52c"/>
</g>
<rect x="516.5" y="40" width="10.5" height="540" fill="#a6a6a6"/>
<rect x="516.5" y="40" width="0.8" height="540" fill="#8c8c8c"/>
<rect x="526.2" y="17" width="1.3" height="572" fill="#6a6a6a"/>
<path d="M518.1,49.0L521.7,42.0L525.3000000000001,49.0Z" fill="#e6e6e6" stroke="#7a7a7a" stroke-width="0.5"/>
<rect x="517.7" y="49.0" width="8" height="1" fill="#6a6a6a"/>
<rect x="517.6" y="532" width="8.0" height="47.5" fill="#c4c4c4"/>
<path d="M518.1,579.5V532.5H525.6" stroke="#f0f0f0" stroke-width="1" fill="none"/>
<path d="M518.6,579.0H525.1V533" stroke="#7c7c7c" stroke-width="1" fill="none"/>
<rect x="0" y="580" width="516.5" height="9" fill="#a6a6a6"/>
<rect x="0" y="580" width="516.5" height="0.8" fill="#8c8c8c"/>
<rect x="208" y="581" width="49" height="7" fill="#c4c4c4"/>
<path d="M208.5,588V581.5H257" stroke="#f0f0f0" stroke-width="1" fill="none"/>
<path d="M209,587.5H256.5V582" stroke="#7c7c7c" stroke-width="1" fill="none"/>
<path d="M507.5,581.0L515.0,584.5L507.5,588.0Z" fill="#d8d8d8" stroke="#7a7a7a" stroke-width="0.5"/>
<rect x="516.5" y="580" width="10" height="9" fill="#f4f4f4"/>
<path d="M519.5,588.5L526,582M522.5,588.5L526,585" stroke="#9a9a9a" stroke-width="0.8"/>
<path d="M520.5,0H533.5L527,5Z" fill="#3a4a78"/>
<rect x="0" y="589" width="528" height="18" fill="#f5f5f5"/>
<rect x="184.5" y="594" width="10.5" height="10" fill="#e4e4e4" stroke="#cfcfcf" stroke-width="0.7"/>
<text x="189.75" y="603" text-anchor="middle" font-family="Liberation Serif, serif" font-size="11" fill="#5c5c5c">X</text>
<text x="200.5" y="603.5" font-family='"Liberation Sans", sans-serif' font-weight="bold" font-size="10.6" fill="#5a5a5a">Event Histogram</text>
<rect x="1.40" y="775.46" width="5.1" height="6.54" fill="#327df0"/>
<rect x="8.10" y="775.46" width="5.1" height="6.54" fill="#2d86ea"/>
<rect x="14.80" y="775.46" width="5.1" height="6.54" fill="#288ee4"/>
<rect x="21.50" y="768.92" width="5.1" height="13.08" fill="#2397dd"/>
<rect x="28.20" y="768.92" width="5.1" height="13.08" fill="#1ea0d7"/>
<rect x="41.60" y="762.38" width="5.1" height="19.62" fill="#1eaabe"/>
<rect x="48.30" y="768.92" width="5.1" height="13.08" fill="#1eafb2"/>
<rect x="55.00" y="762.38" width="5.1" height="19.62" fill="#1eb4a5"/>
<rect x="61.70" y="775.46" width="5.1" height="6.54" fill="#1eb79d"/>
<rect x="68.40" y="775.46" width="5.1" height="6.54" fill="#1ebb94"/>
<rect x="75.10" y="775.46" width="5.1" height="6.54" fill="#1ebe8c"/>
<rect x="81.80" y="775.46" width="5.1" height="6.54" fill="#1ec17f"/>
<rect x="88.50" y="762.38" width="5.1" height="19.62" fill="#1ec571"/>
<rect x="95.20" y="762.38" width="5.1" height="19.62" fill="#1ec864"/>
<rect x="108.60" y="768.92" width="5.1" height="13.08" fill="#23ce4b"/>
<rect x="115.30" y="775.46" width="5.1" height="6.54" fill="#26d13e"/>
<rect x="122.00" y="762.38" width="5.1" height="19.62" fill="#28d432"/>
<rect x="128.70" y="755.84" width="5.1" height="26.16" fill="#30d42f"/>
<rect x="135.40" y="749.30" width="5.1" height="32.70" fill="#37d52b"/>
<rect x="142.10" y="775.46" width="5.1" height="6.54" fill="#3ed628"/>
<rect x="148.80" y="755.84" width="5.1" height="26.16" fill="#46d625"/>
<rect x="155.50" y="762.38" width="5.1" height="19.62" fill="#4ed621"/>
<rect x="162.20" y="768.92" width="5.1" height="13.08" fill="#55d71e"/>
<rect x="168.90" y="742.76" width="5.1" height="39.24" fill="#62da1e"/>
<rect x="175.60" y="755.84" width="5.1" height="26.16" fill="#70dc1e"/>
<rect x="182.30" y="755.84" width="5.1" height="26.16" fill="#7dde1e"/>
<rect x="189.00" y="768.92" width="5.1" height="13.08" fill="#8ae11e"/>
<rect x="195.70" y="749.30" width="5.1" height="32.70" fill="#98e41e"/>
<rect x="202.40" y="749.30" width="5.1" height="32.70" fill="#a5e61e"/>
<rect x="209.10" y="736.22" width="5.1" height="45.78" fill="#afe81e"/>
<rect x="215.80" y="742.76" width="5.1" height="39.24" fill="#b9e91e"/>
<rect x="222.50" y="723.14" width="5.1" height="58.86" fill="#c3eb1e"/>
<rect x="229.20" y="729.68" width="5.1" height="52.32" fill="#cded1e"/>
<rect x="235.90" y="755.84" width="5.1" height="26.16" fill="#d7ee1e"/>
<rect x="242.60" y="723.14" width="5.1" height="58.86" fill="#e1f01e"/>
<rect x="249.30" y="742.76" width="5.1" height="39.24" fill="#e7f01f"/>
<rect x="256.00" y="762.38" width="5.1" height="19.62" fill="#eef020"/>
<rect x="262.70" y="716.60" width="5.1" height="65.40" fill="#f4f022"/>
<rect x="269.40" y="762.38" width="5.1" height="19.62" fill="#faf023"/>
<rect x="276.10" y="736.22" width="5.1" height="45.78" fill="#faea23"/>
<rect x="282.80" y="755.84" width="5.1" height="26.16" fill="#fae423"/>
<rect x="289.50" y="729.68" width="5.1" height="52.32" fill="#fade23"/>
<rect x="296.20" y="710.06" width="5.1" height="71.94" fill="#fad923"/>
<rect x="302.90" y="716.60" width="5.1" height="65.40" fill="#fad323"/>
<rect x="309.60" y="670.82" width="5.1" height="111.18" fill="#facd23"/>
<rect x="316.30" y="690.44" width="5.1" height="91.56" fill="#fac923"/>
<rect x="323.00" y="723.14" width="5.1" height="58.86" fill="#f9c523"/>
<rect x="329.70" y="664.28" width="5.1" height="117.72" fill="#f9c023"/>
<rect x="336.40" y="651.20" width="5.1" height="130.80" fill="#f9bc23"/>
<rect x="343.10" y="657.74" width="5.1" height="124.26" fill="#f8b823"/>
<rect x="349.80" y="716.60" width="5.1" height="65.40" fill="#f8b423"/>
<rect x="356.50" y="638.12" width="5.1" height="143.88" fill="#f7ae23"/>
<rect x="363.20" y="710.06" width="5.1" height="71.94" fill="#f6a823"/>
<rect x="369.90" y="723.14" width="5.1" height="58.86" fill="#f4a223"/>
<rect x="376.60" y="729.68" width="5.1" height="52.32" fill="#f39c23"/>
<rect x="383.30" y="768.92" width="5.1" height="13.08" fill="#f29623"/>
<rect x="390.00" y="775.46" width="5.1" height="6.54" fill="#f18e23"/>
<rect x="396.70" y="768.92" width="5.1" height="13.08" fill="#f08623"/>
<rect x="410.10" y="775.46" width="5.1" height="6.54" fill="#ee7623"/>
<rect x="430.20" y="775.46" width="5.1" height="6.54" fill="#ec6423"/>
<rect x="457.00" y="775.46" width="5.1" height="6.54" fill="#e6321e"/>
<rect x="503.90" y="775.46" width="5.1" height="6.54" fill="#f2b4c8"/>
<rect x="0" y="782.0" width="511" height="1.1" fill="#d8d8d8"/>
<rect x="0.90" y="783.0" width="1" height="2" fill="#c8c8c8"/>
<rect x="14.30" y="783.0" width="1" height="2" fill="#c8c8c8"/>
<rect x="27.70" y="783.0" width="1" height="3" fill="#c8c8c8"/>
<rect x="41.10" y="783.0" width="1" height="2" fill="#c8c8c8"/>
<rect x="54.50" y="783.0" width="1" height="2" fill="#c8c8c8"/>
<rect x="67.90" y="783.0" width="1" height="2" fill="#c8c8c8"/>
<rect x="81.30" y="783.0" width="1" height="3" fill="#c8c8c8"/>
<rect x="94.70" y="783.0" width="1" height="2" fill="#c8c8c8"/>
<rect x="108.10" y="783.0" width="1" height="2" fill="#c8c8c8"/>
<rect x="121.50" y="783.0" width="1" height="2" fill="#c8c8c8"/>
<rect x="134.90" y="783.0" width="1" height="3" fill="#c8c8c8"/>
<rect x="148.30" y="783.0" width="1" height="2" fill="#c8c8c8"/>
<rect x="161.70" y="783.0" width="1" height="2" fill="#c8c8c8"/>
<rect x="175.10" y="783.0" width="1" height="2" fill="#c8c8c8"/>
<rect x="188.50" y="783.0" width="1" height="3" fill="#c8c8c8"/>
<rect x="201.90" y="783.0" width="1" height="2" fill="#c8c8c8"/>
<rect x="215.30" y="783.0" width="1" height="2" fill="#c8c8c8"/>
<rect x="228.70" y="783.0" width="1" height="2" fill="#c8c8c8"/>
<rect x="242.10" y="783.0" width="1" height="3" fill="#c8c8c8"/>
<rect x="255.50" y="783.0" width="1" height="2" fill="#c8c8c8"/>
<rect x="268.90" y="783.0" width="1" height="2" fill="#c8c8c8"/>
<rect x="282.30" y="783.0" width="1" height="2" fill="#c8c8c8"/>
<rect x="295.70" y="783.0" width="1" height="3" fill="#c8c8c8"/>
<rect x="309.10" y="783.0" width="1" height="2" fill="#c8c8c8"/>
<rect x="322.50" y="783.0" width="1" height="2" fill="#c8c8c8"/>
<rect x="335.90" y="783.0" width="1" height="2" fill="#c8c8c8"/>
<rect x="349.30" y="783.0" width="1" height="3" fill="#c8c8c8"/>
<rect x="362.70" y="783.0" width="1" height="2" fill="#c8c8c8"/>
<rect x="376.10" y="783.0" width="1" height="2" fill="#c8c8c8"/>
<rect x="389.50" y="783.0" width="1" height="2" fill="#c8c8c8"/>
<rect x="402.90" y="783.0" width="1" height="3" fill="#c8c8c8"/>
<rect x="416.30" y="783.0" width="1" height="2" fill="#c8c8c8"/>
<rect x="429.70" y="783.0" width="1" height="2" fill="#c8c8c8"/>
<rect x="443.10" y="783.0" width="1" height="2" fill="#c8c8c8"/>
<rect x="456.50" y="783.0" width="1" height="3" fill="#c8c8c8"/>
<rect x="469.90" y="783.0" width="1" height="2" fill="#c8c8c8"/>
<rect x="483.30" y="783.0" width="1" height="2" fill="#c8c8c8"/>
<rect x="496.70" y="783.0" width="1" height="2" fill="#c8c8c8"/>
<rect x="510.10" y="783.0" width="1" height="3" fill="#c8c8c8"/>
<text x="18.00" y="795.5" textLength="20.4" lengthAdjust="spacingAndGlyphs" font-family='"Liberation Sans", sans-serif' font-size="10.2" fill="#d4d4d4">1200</text>
<text x="71.60" y="795.5" textLength="20.4" lengthAdjust="spacingAndGlyphs" font-family='"Liberation Sans", sans-serif' font-size="10.2" fill="#d4d4d4">1400</text>
<text x="125.20" y="795.5" textLength="20.4" lengthAdjust="spacingAndGlyphs" font-family='"Liberation Sans", sans-serif' font-size="10.2" fill="#d4d4d4">1600</text>
<text x="178.80" y="795.5" textLength="20.4" lengthAdjust="spacingAndGlyphs" font-family='"Liberation Sans", sans-serif' font-size="10.2" fill="#d4d4d4">1800</text>
<text x="232.40" y="795.5" textLength="20.4" lengthAdjust="spacingAndGlyphs" font-family='"Liberation Sans", sans-serif' font-size="10.2" fill="#d4d4d4">2000</text>
<text x="286.00" y="795.5" textLength="20.4" lengthAdjust="spacingAndGlyphs" font-family='"Liberation Sans", sans-serif' font-size="10.2" fill="#d4d4d4">2200</text>
<text x="339.60" y="795.5" textLength="20.4" lengthAdjust="spacingAndGlyphs" font-family='"Liberation Sans", sans-serif' font-size="10.2" fill="#d4d4d4">2400</text>
<text x="393.20" y="795.5" textLength="20.4" lengthAdjust="spacingAndGlyphs" font-family='"Liberation Sans", sans-serif' font-size="10.2" fill="#d4d4d4">2600</text>
<text x="446.80" y="795.5" textLength="20.4" lengthAdjust="spacingAndGlyphs" font-family='"Liberation Sans", sans-serif' font-size="10.2" fill="#d4d4d4">2800</text>
<text x="500.40" y="795.5" textLength="20.4" lengthAdjust="spacingAndGlyphs" font-family='"Liberation Sans", sans-serif' font-size="10.2" fill="#d4d4d4">3000</text>
<text x="469.6" y="619" font-family='"Liberation Sans", sans-serif' font-size="9.6" fill="#d8d8d8">Tac (raw)</text>
<rect x="527" y="0" width="673" height="16" fill="#f5f5f5"/>
<rect x="527" y="15" width="673" height="1.5" fill="#fafafa"/>
<circle cx="538.5" cy="8" r="4.5" fill="#d6d6d6" stroke="#c6c6c6" stroke-width="0.8"/>
<circle cx="553.5" cy="8" r="4.5" fill="#d6d6d6" stroke="#c6c6c6" stroke-width="0.8"/>
<circle cx="568.5" cy="8" r="4.5" fill="#d6d6d6" stroke="#c6c6c6" stroke-width="0.8"/>
<rect x="862.3" y="4" width="10.5" height="10" fill="#e4e4e4" stroke="#cfcfcf" stroke-width="0.7"/>
<text x="867.55" y="13" text-anchor="middle" font-family="Liberation Serif, serif" font-size="11" fill="#5c5c5c">X</text>
<text x="879" y="12.6" font-family='"Liberation Sans", sans-serif' font-weight="bold" font-size="10.6" fill="#5a5a5a">Crate Map</text>
<rect x="527.5" y="16.5" width="11.5" height="355.5" fill="#a6a6a6"/>
<rect x="527.3" y="16.5" width="1.2" height="355.5" fill="#5c5c5c"/>
<rect x="537.6" y="16.5" width="1.2" height="355.5" fill="#d4d4d4"/>
<path d="M529.6,25.5L533.2,18.5L536.8000000000001,25.5Z" fill="#e6e6e6" stroke="#7a7a7a" stroke-width="0.5"/>
<rect x="529.2" y="25.5" width="8" height="1" fill="#6a6a6a"/>
<path d="M529.6,361.5L533.2,368.5L536.8000000000001,361.5Z" fill="#d8d8d8" stroke="#7a7a7a" stroke-width="0.5"/>
<rect x="528.7" y="369.5" width="9" height="1.2" fill="#eeeeee"/>
<rect x="529.2" y="238.3" width="8.0" height="29.80000000000001" fill="#c4c4c4"/>
<path d="M529.7,268.1V238.8H537.2" stroke="#f0f0f0" stroke-width="1" fill="none"/>
<path d="M530.2,267.6H536.7V239.3" stroke="#7c7c7c" stroke-width="1" fill="none"/>
<clipPath id="cmclip"><rect x="539" y="16.5" width="661" height="355.5"/></clipPath>
<g clip-path="url(#cmclip)">
<rect x="553.70" y="62.50" width="61.0" height="121.5" fill="none" stroke="#cfcfcf" stroke-width="1"/>
<path d="M551.7,62.5H553.7M553.7,184.0V186.0M551.7,92.9H553.7M569.0,184.0V186.0M551.7,123.2H553.7M584.2,184.0V186.0M551.7,153.6H553.7M599.5,184.0V186.0M551.7,184.0H553.7M614.7,184.0V186.0" stroke="#cfcfcf" stroke-width="1" fill="none"/>
<text x="584.20" y="58.20" text-anchor="middle" font-family='"Liberation Sans", sans-serif' font-size="9.4" fill="#dadada">0</text>
<rect x="624.08" y="62.50" width="61.0" height="121.5" fill="none" stroke="#cfcfcf" stroke-width="1"/>
<path d="M622.1,62.5H624.1M624.1,184.0V186.0M622.1,92.9H624.1M639.3,184.0V186.0M622.1,123.2H624.1M654.6,184.0V186.0M622.1,153.6H624.1M669.8,184.0V186.0M622.1,184.0H624.1M685.1,184.0V186.0" stroke="#cfcfcf" stroke-width="1" fill="none"/>
<text x="654.58" y="58.20" text-anchor="middle" font-family='"Liberation Sans", sans-serif' font-size="9.4" fill="#dadada">1</text>
<rect x="694.46" y="62.50" width="61.0" height="121.5" fill="none" stroke="#cfcfcf" stroke-width="1"/>
<path d="M692.5,62.5H694.5M694.5,184.0V186.0M692.5,92.9H694.5M709.7,184.0V186.0M692.5,123.2H694.5M725.0,184.0V186.0M692.5,153.6H694.5M740.2,184.0V186.0M692.5,184.0H694.5M755.5,184.0V186.0" stroke="#cfcfcf" stroke-width="1" fill="none"/>
<text x="724.96" y="58.20" text-anchor="middle" font-family='"Liberation Sans", sans-serif' font-size="9.4" fill="#dadada">2</text>
<rect x="764.84" y="62.50" width="61.0" height="121.5" fill="none" stroke="#cfcfcf" stroke-width="1"/>
<path d="M762.8,62.5H764.8M764.8,184.0V186.0M762.8,92.9H764.8M780.1,184.0V186.0M762.8,123.2H764.8M795.3,184.0V186.0M762.8,153.6H764.8M810.6,184.0V186.0M762.8,184.0H764.8M825.8,184.0V186.0" stroke="#cfcfcf" stroke-width="1" fill="none"/>
<text x="795.34" y="58.20" text-anchor="middle" font-family='"Liberation Sans", sans-serif' font-size="9.4" fill="#dadada">3</text>
<rect x="835.22" y="62.50" width="61.0" height="121.5" fill="none" stroke="#cfcfcf" stroke-width="1"/>
<path d="M833.2,62.5H835.2M835.2,184.0V186.0M833.2,92.9H835.2M850.5,184.0V186.0M833.2,123.2H835.2M865.7,184.0V186.0M833.2,153.6H835.2M881.0,184.0V186.0M833.2,184.0H835.2M896.2,184.0V186.0" stroke="#cfcfcf" stroke-width="1" fill="none"/>
<text x="865.72" y="58.20" text-anchor="middle" font-family='"Liberation Sans", sans-serif' font-size="9.4" fill="#dadada">4</text>
<rect x="905.60" y="62.50" width="61.0" height="121.5" fill="none" stroke="#cfcfcf" stroke-width="1"/>
<path d="M903.6,62.5H905.6M905.6,184.0V186.0M903.6,92.9H905.6M920.9,184.0V186.0M903.6,123.2H905.6M936.1,184.0V186.0M903.6,153.6H905.6M951.4,184.0V186.0M903.6,184.0H905.6M966.6,184.0V186.0" stroke="#cfcfcf" stroke-width="1" fill="none"/>
<text x="936.10" y="58.20" text-anchor="middle" font-family='"Liberation Sans", sans-serif' font-size="9.4" fill="#dadada">5</text>
<rect x="975.98" y="62.50" width="61.0" height="121.5" fill="none" stroke="#cfcfcf" stroke-width="1"/>
<path d="M974.0,62.5H976.0M976.0,184.0V186.0M974.0,92.9H976.0M991.2,184.0V186.0M974.0,123.2H976.0M1006.5,184.0V186.0M974.0,153.6H976.0M1021.7,184.0V186.0M974.0,184.0H976.0M1037.0,184.0V186.0" stroke="#cfcfcf" stroke-width="1" fill="none"/>
<text x="1006.48" y="58.20" text-anchor="middle" font-family='"Liberation Sans", sans-serif' font-size="9.4" fill="#dadada">6</text>
<rect x="1046.36" y="62.50" width="61.0" height="121.5" fill="none" stroke="#cfcfcf" stroke-width="1"/>
<path d="M1044.4,62.5H1046.4M1046.4,184.0V186.0M1044.4,92.9H1046.4M1061.6,184.0V186.0M1044.4,123.2H1046.4M1076.9,184.0V186.0M1044.4,153.6H1046.4M1092.1,184.0V186.0M1044.4,184.0H1046.4M1107.4,184.0V186.0" stroke="#cfcfcf" stroke-width="1" fill="none"/>
<text x="1076.86" y="58.20" text-anchor="middle" font-family='"Liberation Sans", sans-serif' font-size="9.4" fill="#dadada">7</text>
<rect x="1116.74" y="62.50" width="61.0" height="121.5" fill="none" stroke="#cfcfcf" stroke-width="1"/>
<path d="M1114.7,62.5H1116.7M1116.7,184.0V186.0M1114.7,92.9H1116.7M1132.0,184.0V186.0M1114.7,123.2H1116.7M1147.2,184.0V186.0M1114.7,153.6H1116.7M1162.5,184.0V186.0M1114.7,184.0H1116.7M1177.7,184.0V186.0" stroke="#cfcfcf" stroke-width="1" fill="none"/>
<text x="1147.24" y="58.20" text-anchor="middle" font-family='"Liberation Sans", sans-serif' font-size="9.4" fill="#dadada">8</text>
<rect x="1187.12" y="62.50" width="61.0" height="121.5" fill="none" stroke="#cfcfcf" stroke-width="1"/>
<path d="M1185.1,62.5H1187.1M1187.1,184.0V186.0M1185.1,92.9H1187.1M1202.4,184.0V186.0M1185.1,123.2H1187.1M1217.6,184.0V186.0M1185.1,153.6H1187.1M1232.9,184.0V186.0M1185.1,184.0H1187.1M1248.1,184.0V186.0" stroke="#cfcfcf" stroke-width="1" fill="none"/>
<text x="1217.62" y="58.20" text-anchor="middle" font-family='"Liberation Sans", sans-serif' font-size="9.4" fill="#dadada">9</text>
<rect x="553.70" y="208.80" width="61.0" height="121.5" fill="none" stroke="#cfcfcf" stroke-width="1"/>
<path d="M551.7,208.8H553.7M553.7,330.3V332.3M551.7,239.2H553.7M569.0,330.3V332.3M551.7,269.6H553.7M584.2,330.3V332.3M551.7,299.9H553.7M599.5,330.3V332.3M551.7,330.3H553.7M614.7,330.3V332.3" stroke="#cfcfcf" stroke-width="1" fill="none"/>
<text x="584.20" y="204.50" text-anchor="middle" font-family='"Liberation Sans", sans-serif' font-size="9.4" fill="#dadada">10</text>
<rect x="624.08" y="208.80" width="61.0" height="121.5" fill="none" stroke="#cfcfcf" stroke-width="1"/>
<path d="M622.1,208.8H624.1M624.1,330.3V332.3M622.1,239.2H624.1M639.3,330.3V332.3M622.1,269.6H624.1M654.6,330.3V332.3M622.1,299.9H624.1M669.8,330.3V332.3M622.1,330.3H624.1M685.1,330.3V332.3" stroke="#cfcfcf" stroke-width="1" fill="none"/>
<text x="654.58" y="204.50" text-anchor="middle" font-family='"Liberation Sans", sans-serif' font-size="9.4" fill="#dadada">11</text>
<rect x="694.46" y="208.80" width="61.0" height="121.5" fill="none" stroke="#cfcfcf" stroke-width="1"/>
<path d="M692.5,208.8H694.5M694.5,330.3V332.3M692.5,239.2H694.5M709.7,330.3V332.3M692.5,269.6H694.5M725.0,330.3V332.3M692.5,299.9H694.5M740.2,330.3V332.3M692.5,330.3H694.5M755.5,330.3V332.3" stroke="#cfcfcf" stroke-width="1" fill="none"/>
<text x="724.96" y="204.50" text-anchor="middle" font-family='"Liberation Sans", sans-serif' font-size="9.4" fill="#dadada">12</text>
<rect x="764.84" y="208.80" width="61.0" height="121.5" fill="none" stroke="#cfcfcf" stroke-width="1"/>
<path d="M762.8,208.8H764.8M764.8,330.3V332.3M762.8,239.2H764.8M780.1,330.3V332.3M762.8,269.6H764.8M795.3,330.3V332.3M762.8,299.9H764.8M810.6,330.3V332.3M762.8,330.3H764.8M825.8,330.3V332.3" stroke="#cfcfcf" stroke-width="1" fill="none"/>
<text x="795.34" y="204.50" text-anchor="middle" font-family='"Liberation Sans", sans-serif' font-size="9.4" fill="#dadada">13</text>
<rect x="835.22" y="208.80" width="61.0" height="121.5" fill="none" stroke="#cfcfcf" stroke-width="1"/>
<path d="M833.2,208.8H835.2M835.2,330.3V332.3M833.2,239.2H835.2M850.5,330.3V332.3M833.2,269.6H835.2M865.7,330.3V332.3M833.2,299.9H835.2M881.0,330.3V332.3M833.2,330.3H835.2M896.2,330.3V332.3" stroke="#cfcfcf" stroke-width="1" fill="none"/>
<text x="865.72" y="204.50" text-anchor="middle" font-family='"Liberation Sans", sans-serif' font-size="9.4" fill="#dadada">14</text>
<rect x="905.60" y="208.80" width="61.0" height="121.5" fill="none" stroke="#cfcfcf" stroke-width="1"/>
<path d="M903.6,208.8H905.6M905.6,330.3V332.3M903.6,239.2H905.6M920.9,330.3V332.3M903.6,269.6H905.6M936.1,330.3V332.3M903.6,299.9H905.6M951.4,330.3V332.3M903.6,330.3H905.6M966.6,330.3V332.3" stroke="#cfcfcf" stroke-width="1" fill="none"/>
<text x="936.10" y="204.50" text-anchor="middle" font-family='"Liberation Sans", sans-serif' font-size="9.4" fill="#dadada">15</text>
<rect x="975.98" y="208.80" width="61.0" height="121.5" fill="none" stroke="#cfcfcf" stroke-width="1"/>
<path d="M974.0,208.8H976.0M976.0,330.3V332.3M974.0,239.2H976.0M991.2,330.3V332.3M974.0,269.6H976.0M1006.5,330.3V332.3M974.0,299.9H976.0M1021.7,330.3V332.3M974.0,330.3H976.0M1037.0,330.3V332.3" stroke="#cfcfcf" stroke-width="1" fill="none"/>
<text x="1006.48" y="204.50" text-anchor="middle" font-family='"Liberation Sans", sans-serif' font-size="9.4" fill="#dadada">16</text>
<rect x="1046.36" y="208.80" width="61.0" height="121.5" fill="none" stroke="#cfcfcf" stroke-width="1"/>
<path d="M1044.4,208.8H1046.4M1046.4,330.3V332.3M1044.4,239.2H1046.4M1061.6,330.3V332.3M1044.4,269.6H1046.4M1076.9,330.3V332.3M1044.4,299.9H1046.4M1092.1,330.3V332.3M1044.4,330.3H1046.4M1107.4,330.3V332.3" stroke="#cfcfcf" stroke-width="1" fill="none"/>
<text x="1076.86" y="204.50" text-anchor="middle" font-family='"Liberation Sans", sans-serif' font-size="9.4" fill="#dadada">17</text>
<rect x="1116.74" y="208.80" width="61.0" height="121.5" fill="none" stroke="#cfcfcf" stroke-width="1"/>
<path d="M1114.7,208.8H1116.7M1116.7,330.3V332.3M1114.7,239.2H1116.7M1132.0,330.3V332.3M1114.7,269.6H1116.7M1147.2,330.3V332.3M1114.7,299.9H1116.7M1162.5,330.3V332.3M1114.7,330.3H1116.7M1177.7,330.3V332.3" stroke="#cfcfcf" stroke-width="1" fill="none"/>
<text x="1147.24" y="204.50" text-anchor="middle" font-family='"Liberation Sans", sans-serif' font-size="9.4" fill="#dadada">18</text>
<rect x="1187.12" y="208.80" width="61.0" height="121.5" fill="none" stroke="#cfcfcf" stroke-width="1"/>
<path d="M1185.1,208.8H1187.1M1187.1,330.3V332.3M1185.1,239.2H1187.1M1202.4,330.3V332.3M1185.1,269.6H1187.1M1217.6,330.3V332.3M1185.1,299.9H1187.1M1232.9,330.3V332.3M1185.1,330.3H1187.1M1248.1,330.3V332.3" stroke="#cfcfcf" stroke-width="1" fill="none"/>
<text x="1217.62" y="204.50" text-anchor="middle" font-family='"Liberation Sans", sans-serif' font-size="9.4" fill="#dadada">19</text>
<rect x="1124.46" y="208.90" width="3.8" height="3.8" fill="#f2a02a"/>
<rect x="1132.09" y="208.90" width="3.8" height="3.8" fill="#f2a02a"/>
<rect x="1135.90" y="208.90" width="3.8" height="3.8" fill="#f6c836"/>
<rect x="1135.90" y="212.70" width="3.8" height="3.8" fill="#f6c836"/>
<rect x="1139.71" y="212.70" width="3.8" height="3.8" fill="#f6c836"/>
<rect x="1132.09" y="216.49" width="3.8" height="3.8" fill="#48c448"/>
<rect x="1139.71" y="216.49" width="3.8" height="3.8" fill="#f6c836"/>
<rect x="1143.53" y="216.49" width="3.8" height="3.8" fill="#f6c836"/>
<rect x="1154.96" y="216.49" width="3.8" height="3.8" fill="#f4b838"/>
<rect x="1128.28" y="220.29" width="3.8" height="3.8" fill="#f6c836"/>
<rect x="1132.09" y="220.29" width="3.8" height="3.8" fill="#f6c836"/>
<rect x="1135.90" y="220.29" width="3.8" height="3.8" fill="#f6c836"/>
<rect x="1143.53" y="220.29" width="3.8" height="3.8" fill="#f6c836"/>
<rect x="1147.34" y="220.29" width="3.8" height="3.8" fill="#f6c836"/>
<rect x="1151.15" y="220.29" width="3.8" height="3.8" fill="#f6c836"/>
<rect x="1154.96" y="220.29" width="3.8" height="3.8" fill="#f6c836"/>
<rect x="1124.46" y="224.09" width="3.8" height="3.8" fill="#48c448"/>
<rect x="1132.09" y="224.09" width="3.8" height="3.8" fill="#f2a02a"/>
<rect x="1132.09" y="227.88" width="3.8" height="3.8" fill="#f2a02a"/>
<rect x="1143.53" y="227.88" width="3.8" height="3.8" fill="#f4b838"/>
<rect x="1124.46" y="231.68" width="3.8" height="3.8" fill="#f4b838"/>
<rect x="1139.71" y="231.68" width="3.8" height="3.8" fill="#f4b838"/>
<rect x="1154.96" y="235.48" width="3.8" height="3.8" fill="#f4b838"/>
<rect x="1128.28" y="239.28" width="3.8" height="3.8" fill="#f4b838"/>
<rect x="1135.90" y="239.28" width="3.8" height="3.8" fill="#f4b838"/>
<rect x="1143.53" y="239.28" width="3.8" height="3.8" fill="#f4b838"/>
<rect x="1154.96" y="239.28" width="3.8" height="3.8" fill="#f4b838"/>
<rect x="1139.71" y="246.87" width="3.8" height="3.8" fill="#f6c836"/>
<rect x="1147.34" y="246.87" width="3.8" height="3.8" fill="#f4b838"/>
<rect x="1151.15" y="246.87" width="3.8" height="3.8" fill="#f4b838"/>
<rect x="1124.46" y="250.67" width="3.8" height="3.8" fill="#f4b838"/>
<rect x="1135.90" y="250.67" width="3.8" height="3.8" fill="#f2a02a"/>
<rect x="1139.71" y="250.67" width="3.8" height="3.8" fill="#f6c836"/>
<rect x="1154.96" y="250.67" width="3.8" height="3.8" fill="#f2a02a"/>
<rect x="1128.28" y="254.46" width="3.8" height="3.8" fill="#f6c836"/>
<rect x="1132.09" y="254.46" width="3.8" height="3.8" fill="#f6c836"/>
<rect x="1135.90" y="254.46" width="3.8" height="3.8" fill="#f6c836"/>
<rect x="1151.15" y="254.46" width="3.8" height="3.8" fill="#f2a02a"/>
<rect x="1124.46" y="258.26" width="3.8" height="3.8" fill="#f6c836"/>
<rect x="1128.28" y="258.26" width="3.8" height="3.8" fill="#f6c836"/>
<rect x="1132.09" y="258.26" width="3.8" height="3.8" fill="#f6c836"/>
<rect x="1135.90" y="258.26" width="3.8" height="3.8" fill="#f6c836"/>
<rect x="1139.71" y="258.26" width="3.8" height="3.8" fill="#f6c836"/>
<rect x="1154.96" y="258.26" width="3.8" height="3.8" fill="#b0dc3a"/>
<rect x="1135.90" y="262.06" width="3.8" height="3.8" fill="#f2a02a"/>
<rect x="1139.71" y="262.06" width="3.8" height="3.8" fill="#f2a02a"/>
<rect x="1154.96" y="262.06" width="3.8" height="3.8" fill="#48c448"/>
<rect x="1128.28" y="265.85" width="3.8" height="3.8" fill="#f6c836"/>
<rect x="1132.09" y="265.85" width="3.8" height="3.8" fill="#f6c836"/>
<rect x="1135.90" y="265.85" width="3.8" height="3.8" fill="#f6c836"/>
<rect x="1139.71" y="265.85" width="3.8" height="3.8" fill="#f6c836"/>
<rect x="1139.71" y="269.65" width="3.8" height="3.8" fill="#f6c836"/>
<rect x="1154.96" y="269.65" width="3.8" height="3.8" fill="#f2a02a"/>
<rect x="1135.90" y="273.45" width="3.8" height="3.8" fill="#f6c836"/>
<rect x="1139.71" y="273.45" width="3.8" height="3.8" fill="#f6c836"/>
<rect x="1128.28" y="277.24" width="3.8" height="3.8" fill="#f6c836"/>
<rect x="1132.09" y="277.24" width="3.8" height="3.8" fill="#f6c836"/>
<rect x="1135.90" y="277.24" width="3.8" height="3.8" fill="#f6c836"/>
<rect x="1139.71" y="277.24" width="3.8" height="3.8" fill="#f6c836"/>
<rect x="1166.40" y="277.24" width="3.8" height="3.8" fill="#f6c836"/>
<rect x="1128.28" y="281.04" width="3.8" height="3.8" fill="#b0dc3a"/>
<rect x="1139.71" y="284.84" width="3.8" height="3.8" fill="#f2a02a"/>
<rect x="1151.15" y="284.84" width="3.8" height="3.8" fill="#f2a02a"/>
<rect x="1154.96" y="288.63" width="3.8" height="3.8" fill="#f2a02a"/>
<rect x="1124.46" y="292.43" width="3.8" height="3.8" fill="#f2a02a"/>
<rect x="1132.09" y="292.43" width="3.8" height="3.8" fill="#f2a02a"/>
<rect x="1139.71" y="292.43" width="3.8" height="3.8" fill="#f2a02a"/>
<rect x="1151.15" y="292.43" width="3.8" height="3.8" fill="#f2a02a"/>
<rect x="1154.96" y="292.43" width="3.8" height="3.8" fill="#f2a02a"/>
<rect x="1166.40" y="292.43" width="3.8" height="3.8" fill="#f2a02a"/>
<rect x="1132.09" y="296.23" width="3.8" height="3.8" fill="#f2a02a"/>
<rect x="1154.96" y="296.23" width="3.8" height="3.8" fill="#f2a02a"/>
<rect x="1124.46" y="300.03" width="3.8" height="3.8" fill="#f2a02a"/>
<rect x="1139.71" y="300.03" width="3.8" height="3.8" fill="#f2a02a"/>
<rect x="1143.53" y="300.03" width="3.8" height="3.8" fill="#f2a02a"/>
<rect x="1124.46" y="303.82" width="3.8" height="3.8" fill="#f2a02a"/>
<rect x="1132.09" y="303.82" width="3.8" height="3.8" fill="#f2a02a"/>
<rect x="1139.71" y="303.82" width="3.8" height="3.8" fill="#f2a02a"/>
<rect x="1151.15" y="303.82" width="3.8" height="3.8" fill="#f2a02a"/>
<rect x="1135.90" y="307.62" width="3.8" height="3.8" fill="#f6c836"/>
<rect x="1139.71" y="307.62" width="3.8" height="3.8" fill="#f6c836"/>
<rect x="1151.15" y="307.62" width="3.8" height="3.8" fill="#f2a02a"/>
<rect x="1154.96" y="307.62" width="3.8" height="3.8" fill="#f2a02a"/>
<rect x="1128.28" y="311.42" width="3.8" height="3.8" fill="#f2a02a"/>
<rect x="1135.90" y="311.42" width="3.8" height="3.8" fill="#f6c836"/>
<rect x="1139.71" y="311.42" width="3.8" height="3.8" fill="#f6c836"/>
<rect x="1151.15" y="311.42" width="3.8" height="3.8" fill="#b0dc3a"/>
<rect x="1128.28" y="315.21" width="3.8" height="3.8" fill="#f2a02a"/>
<rect x="1135.90" y="315.21" width="3.8" height="3.8" fill="#f2a02a"/>
<rect x="1139.71" y="315.21" width="3.8" height="3.8" fill="#f2a02a"/>
<rect x="1124.46" y="319.01" width="3.8" height="3.8" fill="#f2a02a"/>
<rect x="1132.09" y="319.01" width="3.8" height="3.8" fill="#f2a02a"/>
<rect x="1135.90" y="319.01" width="3.8" height="3.8" fill="#f2a02a"/>
<rect x="1151.15" y="319.01" width="3.8" height="3.8" fill="#f2a02a"/>
<rect x="1124.46" y="322.81" width="3.8" height="3.8" fill="#f2a02a"/>
<rect x="1128.28" y="322.81" width="3.8" height="3.8" fill="#f2a02a"/>
<rect x="1135.90" y="322.81" width="3.8" height="3.8" fill="#f2a02a"/>
<rect x="1139.71" y="322.81" width="3.8" height="3.8" fill="#f2a02a"/>
<rect x="1151.15" y="322.81" width="3.8" height="3.8" fill="#f2a02a"/>
<rect x="1154.96" y="322.81" width="3.8" height="3.8" fill="#f2a02a"/>
<rect x="1151.15" y="326.60" width="3.8" height="3.8" fill="#f2a02a"/>
<rect x="1158.78" y="326.60" width="3.8" height="3.8" fill="#f6c836"/>
<rect x="561.43" y="70.19" width="3.8" height="3.8" fill="#f4b838"/>
<rect x="561.43" y="73.99" width="3.8" height="3.8" fill="#f4b838"/>
<rect x="584.30" y="70.19" width="3.8" height="3.8" fill="#f6c836"/>
<rect x="553.80" y="77.79" width="3.8" height="3.8" fill="#f4b838"/>
<rect x="565.24" y="81.58" width="3.8" height="3.8" fill="#b0dc3a"/>
<rect x="610.99" y="77.79" width="3.8" height="3.8" fill="#38a8a0"/>
<rect x="553.80" y="85.38" width="3.8" height="3.8" fill="#f2a02a"/>
<rect x="557.61" y="100.57" width="3.8" height="3.8" fill="#f4b838"/>
<rect x="561.43" y="100.57" width="3.8" height="3.8" fill="#f4b838"/>
<rect x="576.68" y="100.57" width="3.8" height="3.8" fill="#f6c836"/>
<rect x="599.55" y="100.57" width="3.8" height="3.8" fill="#f6c836"/>
<rect x="561.43" y="111.96" width="3.8" height="3.8" fill="#f6c836"/>
<rect x="565.24" y="111.96" width="3.8" height="3.8" fill="#f6c836"/>
<rect x="557.61" y="115.76" width="3.8" height="3.8" fill="#f6c836"/>
<rect x="561.43" y="115.76" width="3.8" height="3.8" fill="#f6c836"/>
<rect x="565.24" y="115.76" width="3.8" height="3.8" fill="#f6c836"/>
<rect x="561.43" y="119.55" width="3.8" height="3.8" fill="#f6c836"/>
<rect x="584.30" y="115.76" width="3.8" height="3.8" fill="#f4b838"/>
<rect x="610.99" y="115.76" width="3.8" height="3.8" fill="#f6c836"/>
<rect x="572.86" y="123.35" width="3.8" height="3.8" fill="#f2a02a"/>
<rect x="557.61" y="127.15" width="3.8" height="3.8" fill="#f2a02a"/>
<rect x="561.43" y="127.15" width="3.8" height="3.8" fill="#f2a02a"/>
<rect x="561.43" y="134.74" width="3.8" height="3.8" fill="#f4b838"/>
<rect x="607.18" y="134.74" width="3.8" height="3.8" fill="#f4b838"/>
<rect x="569.05" y="138.54" width="3.8" height="3.8" fill="#f2a02a"/>
<rect x="561.43" y="142.33" width="3.8" height="3.8" fill="#f2a02a"/>
<rect x="565.24" y="142.33" width="3.8" height="3.8" fill="#f2a02a"/>
<rect x="569.05" y="142.33" width="3.8" height="3.8" fill="#f2a02a"/>
<rect x="584.30" y="142.33" width="3.8" height="3.8" fill="#f4b838"/>
<rect x="591.93" y="142.33" width="3.8" height="3.8" fill="#f2a02a"/>
<rect x="561.43" y="149.93" width="3.8" height="3.8" fill="#f4b838"/>
<rect x="591.93" y="149.93" width="3.8" height="3.8" fill="#f6c836"/>
<rect x="576.68" y="153.72" width="3.8" height="3.8" fill="#b0dc3a"/>
<rect x="565.24" y="157.52" width="3.8" height="3.8" fill="#f4b838"/>
<rect x="569.05" y="157.52" width="3.8" height="3.8" fill="#f4b838"/>
<rect x="572.86" y="157.52" width="3.8" height="3.8" fill="#f6c836"/>
<rect x="565.24" y="161.32" width="3.8" height="3.8" fill="#f4b838"/>
<rect x="588.11" y="157.52" width="3.8" height="3.8" fill="#f2a02a"/>
<rect x="553.80" y="165.12" width="3.8" height="3.8" fill="#f4b838"/>
<rect x="553.80" y="168.91" width="3.8" height="3.8" fill="#f4b838"/>
<rect x="584.30" y="165.12" width="3.8" height="3.8" fill="#b0dc3a"/>
<rect x="565.24" y="168.91" width="3.8" height="3.8" fill="#f4b838"/>
<rect x="565.24" y="172.71" width="3.8" height="3.8" fill="#f4b838"/>
<rect x="565.24" y="176.51" width="3.8" height="3.8" fill="#f4b838"/>
<rect x="569.05" y="176.51" width="3.8" height="3.8" fill="#f4b838"/>
<rect x="565.24" y="180.30" width="3.8" height="3.8" fill="#f4b838"/>
<rect x="569.05" y="180.30" width="3.8" height="3.8" fill="#f4b838"/>
<rect x="584.30" y="172.71" width="3.8" height="3.8" fill="#f6c836"/>
<rect x="588.11" y="172.71" width="3.8" height="3.8" fill="#f6c836"/>
<rect x="584.30" y="176.51" width="3.8" height="3.8" fill="#f6c836"/>
<rect x="1076.96" y="208.90" width="3.8" height="3.8" fill="#f4b838"/>
<rect x="1080.77" y="208.90" width="3.8" height="3.8" fill="#f4b838"/>
<rect x="1076.96" y="212.70" width="3.8" height="3.8" fill="#f4b838"/>
<rect x="1061.71" y="216.49" width="3.8" height="3.8" fill="#f2a02a"/>
<rect x="1061.71" y="220.29" width="3.8" height="3.8" fill="#f2a02a"/>
<rect x="1050.27" y="224.09" width="3.8" height="3.8" fill="#f4b838"/>
<rect x="1054.09" y="224.09" width="3.8" height="3.8" fill="#f4b838"/>
<rect x="1073.15" y="224.09" width="3.8" height="3.8" fill="#f6c836"/>
<rect x="1103.65" y="216.49" width="3.8" height="3.8" fill="#90c4f0"/>
<rect x="1103.65" y="220.29" width="3.8" height="3.8" fill="#90c4f0"/>
<rect x="1080.77" y="227.88" width="3.8" height="3.8" fill="#f2a02a"/>
<rect x="1080.77" y="231.68" width="3.8" height="3.8" fill="#f2a02a"/>
<rect x="1080.77" y="235.48" width="3.8" height="3.8" fill="#f2a02a"/>
<rect x="1080.77" y="239.28" width="3.8" height="3.8" fill="#f2a02a"/>
<rect x="1092.21" y="235.48" width="3.8" height="3.8" fill="#48c448"/>
<rect x="1050.27" y="235.48" width="3.8" height="3.8" fill="#f6c836"/>
<rect x="1061.71" y="239.28" width="3.8" height="3.8" fill="#f4b838"/>
<rect x="1103.65" y="239.28" width="3.8" height="3.8" fill="#90c4f0"/>
<rect x="1050.27" y="243.07" width="3.8" height="3.8" fill="#f2a02a"/>
<rect x="1061.71" y="246.87" width="3.8" height="3.8" fill="#f4b838"/>
<rect x="1065.52" y="254.46" width="3.8" height="3.8" fill="#f2a02a"/>
<rect x="1080.77" y="250.67" width="3.8" height="3.8" fill="#f4b838"/>
<rect x="1080.77" y="254.46" width="3.8" height="3.8" fill="#f4b838"/>
<rect x="1103.65" y="254.46" width="3.8" height="3.8" fill="#90c4f0"/>
<rect x="1057.90" y="258.26" width="3.8" height="3.8" fill="#f2a02a"/>
<rect x="1057.90" y="262.06" width="3.8" height="3.8" fill="#f2a02a"/>
<rect x="1092.21" y="258.26" width="3.8" height="3.8" fill="#f6c836"/>
<rect x="1069.34" y="262.06" width="3.8" height="3.8" fill="#f6c836"/>
<rect x="1054.09" y="265.85" width="3.8" height="3.8" fill="#f4b838"/>
<rect x="1065.52" y="265.85" width="3.8" height="3.8" fill="#f2a02a"/>
<rect x="1080.77" y="262.06" width="3.8" height="3.8" fill="#f6c836"/>
<rect x="1080.77" y="265.85" width="3.8" height="3.8" fill="#f6c836"/>
<rect x="1080.77" y="269.65" width="3.8" height="3.8" fill="#48c448"/>
<rect x="1103.65" y="262.06" width="3.8" height="3.8" fill="#90c4f0"/>
<rect x="1092.21" y="273.45" width="3.8" height="3.8" fill="#38a8a0"/>
<rect x="1050.27" y="277.24" width="3.8" height="3.8" fill="#f4b838"/>
<rect x="1050.27" y="284.84" width="3.8" height="3.8" fill="#f2a02a"/>
<rect x="1065.52" y="281.04" width="3.8" height="3.8" fill="#f2a02a"/>
<rect x="1069.34" y="281.04" width="3.8" height="3.8" fill="#f6c836"/>
<rect x="1065.52" y="284.84" width="3.8" height="3.8" fill="#f2a02a"/>
<rect x="1065.52" y="288.63" width="3.8" height="3.8" fill="#f2a02a"/>
<rect x="1069.34" y="288.63" width="3.8" height="3.8" fill="#f2a02a"/>
<rect x="1080.77" y="281.04" width="3.8" height="3.8" fill="#f4b838"/>
<rect x="1088.40" y="281.04" width="3.8" height="3.8" fill="#f2a02a"/>
<rect x="1096.02" y="284.84" width="3.8" height="3.8" fill="#f4b838"/>
<rect x="1096.02" y="288.63" width="3.8" height="3.8" fill="#f4b838"/>
<rect x="1054.09" y="292.43" width="3.8" height="3.8" fill="#f2a02a"/>
<rect x="1080.77" y="288.63" width="3.8" height="3.8" fill="#f4b838"/>
<rect x="1080.77" y="292.43" width="3.8" height="3.8" fill="#f4b838"/>
<rect x="1080.77" y="296.23" width="3.8" height="3.8" fill="#f4b838"/>
<rect x="1065.52" y="296.23" width="3.8" height="3.8" fill="#f2a02a"/>
<rect x="1065.52" y="300.03" width="3.8" height="3.8" fill="#f2a02a"/>
<rect x="1069.34" y="300.03" width="3.8" height="3.8" fill="#f2a02a"/>
<rect x="1069.34" y="303.82" width="3.8" height="3.8" fill="#38a8a0"/>
<rect x="1080.77" y="307.62" width="3.8" height="3.8" fill="#f2a02a"/>
<rect x="1080.77" y="311.42" width="3.8" height="3.8" fill="#f2a02a"/>
<rect x="1061.71" y="311.42" width="3.8" height="3.8" fill="#f6c836"/>
<rect x="1065.52" y="315.21" width="3.8" height="3.8" fill="#f4b838"/>
<rect x="1069.34" y="315.21" width="3.8" height="3.8" fill="#f4b838"/>
<rect x="1065.52" y="319.01" width="3.8" height="3.8" fill="#f4b838"/>
<rect x="1061.71" y="322.81" width="3.8" height="3.8" fill="#f4b838"/>
<rect x="1065.52" y="322.81" width="3.8" height="3.8" fill="#f4b838"/>
<rect x="1073.15" y="322.81" width="3.8" height="3.8" fill="#48c448"/>
<rect x="1088.40" y="319.01" width="3.8" height="3.8" fill="#f6c836"/>
<rect x="639.43" y="81.58" width="3.8" height="3.8" fill="#eee23a"/>
<rect x="677.56" y="77.79" width="3.8" height="3.8" fill="#b0dc3a"/>
<rect x="627.99" y="115.76" width="3.8" height="3.8" fill="#f4b838"/>
<rect x="744.12" y="73.99" width="3.8" height="3.8" fill="#f2a02a"/>
<rect x="751.75" y="100.57" width="3.8" height="3.8" fill="#eee23a"/>
<rect x="694.56" y="108.16" width="3.8" height="3.8" fill="#38a8a0"/>
<rect x="706.00" y="130.94" width="3.8" height="3.8" fill="#48c448"/>
<rect x="751.75" y="134.74" width="3.8" height="3.8" fill="#b0dc3a"/>
<rect x="740.31" y="149.93" width="3.8" height="3.8" fill="#f4b838"/>
<rect x="740.31" y="157.52" width="3.8" height="3.8" fill="#f4b838"/>
<rect x="721.25" y="176.51" width="3.8" height="3.8" fill="#f4b838"/>
<rect x="721.25" y="180.30" width="3.8" height="3.8" fill="#f4b838"/>
<rect x="736.50" y="176.51" width="3.8" height="3.8" fill="#48c448"/>
<rect x="803.07" y="70.19" width="3.8" height="3.8" fill="#38a8a0"/>
<rect x="818.32" y="73.99" width="3.8" height="3.8" fill="#eee23a"/>
<rect x="772.57" y="77.79" width="3.8" height="3.8" fill="#eee23a"/>
<rect x="803.07" y="77.79" width="3.8" height="3.8" fill="#eee23a"/>
<rect x="764.94" y="89.18" width="3.8" height="3.8" fill="#eee23a"/>
<rect x="799.25" y="100.57" width="3.8" height="3.8" fill="#eee23a"/>
<rect x="806.88" y="127.15" width="3.8" height="3.8" fill="#eee23a"/>
<rect x="791.63" y="176.51" width="3.8" height="3.8" fill="#5080e0"/>
<rect x="884.88" y="73.99" width="3.8" height="3.8" fill="#48c448"/>
<rect x="884.88" y="77.79" width="3.8" height="3.8" fill="#eee23a"/>
<rect x="865.82" y="92.97" width="3.8" height="3.8" fill="#48c448"/>
<rect x="873.45" y="104.37" width="3.8" height="3.8" fill="#eee23a"/>
<rect x="846.76" y="130.94" width="3.8" height="3.8" fill="#eee23a"/>
<rect x="888.70" y="134.74" width="3.8" height="3.8" fill="#eee23a"/>
<rect x="865.82" y="138.54" width="3.8" height="3.8" fill="#eee23a"/>
<rect x="884.88" y="146.13" width="3.8" height="3.8" fill="#b0dc3a"/>
<rect x="869.63" y="153.72" width="3.8" height="3.8" fill="#eee23a"/>
<rect x="865.82" y="176.51" width="3.8" height="3.8" fill="#eee23a"/>
<rect x="913.33" y="81.58" width="3.8" height="3.8" fill="#48c448"/>
<rect x="932.39" y="81.58" width="3.8" height="3.8" fill="#e84828"/>
<rect x="928.58" y="92.97" width="3.8" height="3.8" fill="#eee23a"/>
<rect x="947.64" y="92.97" width="3.8" height="3.8" fill="#5080e0"/>
<rect x="959.08" y="115.76" width="3.8" height="3.8" fill="#b0dc3a"/>
<rect x="955.26" y="127.15" width="3.8" height="3.8" fill="#b0dc3a"/>
<rect x="947.64" y="157.52" width="3.8" height="3.8" fill="#b0dc3a"/>
<rect x="947.64" y="172.71" width="3.8" height="3.8" fill="#b0dc3a"/>
<rect x="1025.64" y="81.58" width="3.8" height="3.8" fill="#eee23a"/>
<rect x="1010.39" y="92.97" width="3.8" height="3.8" fill="#eee23a"/>
<rect x="1018.02" y="108.16" width="3.8" height="3.8" fill="#48c448"/>
<rect x="1010.39" y="111.96" width="3.8" height="3.8" fill="#eee23a"/>
<rect x="979.89" y="119.55" width="3.8" height="3.8" fill="#eee23a"/>
<rect x="1002.77" y="176.51" width="3.8" height="3.8" fill="#b0dc3a"/>
<rect x="1006.58" y="180.30" width="3.8" height="3.8" fill="#b0dc3a"/>
<rect x="1061.71" y="66.40" width="3.8" height="3.8" fill="#90c4f0"/>
<rect x="1050.27" y="96.77" width="3.8" height="3.8" fill="#eee23a"/>
<rect x="1054.09" y="96.77" width="3.8" height="3.8" fill="#eee23a"/>
<rect x="1057.90" y="96.77" width="3.8" height="3.8" fill="#b0dc3a"/>
<rect x="1103.65" y="96.77" width="3.8" height="3.8" fill="#38a8a0"/>
<rect x="1088.40" y="104.37" width="3.8" height="3.8" fill="#48c448"/>
<rect x="1065.52" y="149.93" width="3.8" height="3.8" fill="#48c448"/>
<rect x="1057.90" y="153.72" width="3.8" height="3.8" fill="#b0dc3a"/>
<rect x="1065.52" y="157.52" width="3.8" height="3.8" fill="#eee23a"/>
<rect x="1103.65" y="165.12" width="3.8" height="3.8" fill="#b0dc3a"/>
<rect x="1124.46" y="73.99" width="3.8" height="3.8" fill="#38a8a0"/>
<rect x="1124.46" y="77.79" width="3.8" height="3.8" fill="#48c448"/>
<rect x="1124.46" y="81.58" width="3.8" height="3.8" fill="#90c4f0"/>
<rect x="1147.34" y="73.99" width="3.8" height="3.8" fill="#38a8a0"/>
<rect x="1132.09" y="123.35" width="3.8" height="3.8" fill="#48c448"/>
<rect x="1158.78" y="165.12" width="3.8" height="3.8" fill="#5080e0"/>
<rect x="1158.78" y="176.51" width="3.8" height="3.8" fill="#eee23a"/>
<rect x="1124.46" y="180.30" width="3.8" height="3.8" fill="#eee23a"/>
<rect x="1187.22" y="104.37" width="3.8" height="3.8" fill="#eee23a"/>
<rect x="1191.03" y="153.72" width="3.8" height="3.8" fill="#eee23a"/>
<rect x="1198.66" y="149.93" width="3.8" height="3.8" fill="#eee23a"/>
<rect x="1191.03" y="172.71" width="3.8" height="3.8" fill="#eee23a"/>
<rect x="595.74" y="208.90" width="3.8" height="3.8" fill="#b0dc3a"/>
<rect x="591.93" y="212.70" width="3.8" height="3.8" fill="#48c448"/>
<rect x="595.74" y="216.49" width="3.8" height="3.8" fill="#90c4f0"/>
<rect x="595.74" y="220.29" width="3.8" height="3.8" fill="#90c4f0"/>
<rect x="595.74" y="224.09" width="3.8" height="3.8" fill="#90c4f0"/>
<rect x="557.61" y="220.29" width="3.8" height="3.8" fill="#48c448"/>
<rect x="576.68" y="216.49" width="3.8" height="3.8" fill="#eee23a"/>
<rect x="610.99" y="227.88" width="3.8" height="3.8" fill="#48c448"/>
<rect x="610.99" y="231.68" width="3.8" height="3.8" fill="#eee23a"/>
<rect x="561.43" y="243.07" width="3.8" height="3.8" fill="#eee23a"/>
<rect x="576.68" y="243.07" width="3.8" height="3.8" fill="#eee23a"/>
<rect x="599.55" y="246.87" width="3.8" height="3.8" fill="#eee23a"/>
<rect x="610.99" y="250.67" width="3.8" height="3.8" fill="#48c448"/>
<rect x="561.43" y="262.06" width="3.8" height="3.8" fill="#eee23a"/>
<rect x="561.43" y="288.63" width="3.8" height="3.8" fill="#eee23a"/>
<rect x="557.61" y="303.82" width="3.8" height="3.8" fill="#eee23a"/>
<rect x="607.18" y="307.62" width="3.8" height="3.8" fill="#48c448"/>
<rect x="669.93" y="231.68" width="3.8" height="3.8" fill="#eee23a"/>
<rect x="669.93" y="246.87" width="3.8" height="3.8" fill="#eee23a"/>
<rect x="669.93" y="250.67" width="3.8" height="3.8" fill="#48c448"/>
<rect x="673.74" y="262.06" width="3.8" height="3.8" fill="#48c448"/>
<rect x="639.43" y="277.24" width="3.8" height="3.8" fill="#f4b838"/>
<rect x="681.37" y="284.84" width="3.8" height="3.8" fill="#b0dc3a"/>
<rect x="639.43" y="311.42" width="3.8" height="3.8" fill="#eee23a"/>
<rect x="681.37" y="326.60" width="3.8" height="3.8" fill="#b0dc3a"/>
<rect x="717.44" y="208.90" width="3.8" height="3.8" fill="#eee23a"/>
<rect x="747.94" y="208.90" width="3.8" height="3.8" fill="#eee23a"/>
<rect x="709.81" y="227.88" width="3.8" height="3.8" fill="#90c4f0"/>
<rect x="713.62" y="231.68" width="3.8" height="3.8" fill="#5080e0"/>
<rect x="721.25" y="235.48" width="3.8" height="3.8" fill="#48c448"/>
<rect x="717.44" y="239.28" width="3.8" height="3.8" fill="#eee23a"/>
<rect x="709.81" y="246.87" width="3.8" height="3.8" fill="#eee23a"/>
<rect x="740.31" y="258.26" width="3.8" height="3.8" fill="#38a8a0"/>
<rect x="751.75" y="326.60" width="3.8" height="3.8" fill="#b0dc3a"/>
<rect x="795.44" y="212.70" width="3.8" height="3.8" fill="#48c448"/>
<rect x="806.88" y="224.09" width="3.8" height="3.8" fill="#eee23a"/>
<rect x="806.88" y="254.46" width="3.8" height="3.8" fill="#48c448"/>
<rect x="814.50" y="258.26" width="3.8" height="3.8" fill="#eee23a"/>
<rect x="795.44" y="265.85" width="3.8" height="3.8" fill="#eee23a"/>
<rect x="806.88" y="265.85" width="3.8" height="3.8" fill="#eee23a"/>
<rect x="814.50" y="273.45" width="3.8" height="3.8" fill="#b0dc3a"/>
<rect x="780.19" y="284.84" width="3.8" height="3.8" fill="#b0dc3a"/>
<rect x="806.88" y="292.43" width="3.8" height="3.8" fill="#48c448"/>
<rect x="818.32" y="296.23" width="3.8" height="3.8" fill="#eee23a"/>
<rect x="791.63" y="303.82" width="3.8" height="3.8" fill="#b0dc3a"/>
<rect x="795.44" y="319.01" width="3.8" height="3.8" fill="#b0dc3a"/>
<rect x="810.69" y="326.60" width="3.8" height="3.8" fill="#eee23a"/>
<rect x="835.32" y="208.90" width="3.8" height="3.8" fill="#38a8a0"/>
<rect x="835.32" y="216.49" width="3.8" height="3.8" fill="#eee23a"/>
<rect x="884.88" y="216.49" width="3.8" height="3.8" fill="#90c4f0"/>
<rect x="892.51" y="220.29" width="3.8" height="3.8" fill="#48c448"/>
<rect x="877.26" y="243.07" width="3.8" height="3.8" fill="#38a8a0"/>
<rect x="854.38" y="284.84" width="3.8" height="3.8" fill="#e84828"/>
<rect x="869.63" y="300.03" width="3.8" height="3.8" fill="#f4b838"/>
<rect x="877.26" y="303.82" width="3.8" height="3.8" fill="#eee23a"/>
<rect x="865.82" y="322.81" width="3.8" height="3.8" fill="#90c4f0"/>
<rect x="924.76" y="224.09" width="3.8" height="3.8" fill="#90c4f0"/>
<rect x="943.83" y="235.48" width="3.8" height="3.8" fill="#eee23a"/>
<rect x="924.76" y="258.26" width="3.8" height="3.8" fill="#48c448"/>
<rect x="928.58" y="258.26" width="3.8" height="3.8" fill="#48c448"/>
<rect x="962.89" y="300.03" width="3.8" height="3.8" fill="#eee23a"/>
<rect x="962.89" y="307.62" width="3.8" height="3.8" fill="#48c448"/>
<rect x="940.01" y="315.21" width="3.8" height="3.8" fill="#90c4f0"/>
<rect x="979.89" y="208.90" width="3.8" height="3.8" fill="#f4c0d0"/>
<rect x="1021.83" y="212.70" width="3.8" height="3.8" fill="#eee23a"/>
<rect x="976.08" y="231.68" width="3.8" height="3.8" fill="#f4b838"/>
<rect x="991.33" y="231.68" width="3.8" height="3.8" fill="#eee23a"/>
<rect x="1018.02" y="239.28" width="3.8" height="3.8" fill="#f4b838"/>
<rect x="1029.45" y="258.26" width="3.8" height="3.8" fill="#38a8a0"/>
<rect x="1018.02" y="262.06" width="3.8" height="3.8" fill="#eee23a"/>
<rect x="983.71" y="281.04" width="3.8" height="3.8" fill="#eee23a"/>
<rect x="976.08" y="284.84" width="3.8" height="3.8" fill="#f4b838"/>
<rect x="1014.21" y="281.04" width="3.8" height="3.8" fill="#5080e0"/>
<rect x="1021.83" y="284.84" width="3.8" height="3.8" fill="#f4b838"/>
<rect x="987.52" y="292.43" width="3.8" height="3.8" fill="#b0dc3a"/>
<rect x="1018.02" y="303.82" width="3.8" height="3.8" fill="#90c4f0"/>
<rect x="1002.77" y="307.62" width="3.8" height="3.8" fill="#eee23a"/>
</g>
<rect x="528" y="372" width="672" height="16.5" fill="#f5f5f5"/>
<circle cx="538.5" cy="380.5" r="4.5" fill="#d6d6d6" stroke="#c6c6c6" stroke-width="0.8"/>
<circle cx="553.5" cy="380.5" r="4.5" fill="#d6d6d6" stroke="#c6c6c6" stroke-width="0.8"/>
<circle cx="568.5" cy="380.5" r="4.5" fill="#d6d6d6" stroke="#c6c6c6" stroke-width="0.8"/>
<rect x="867" y="375.5" width="10.5" height="10" fill="#e4e4e4" stroke="#cfcfcf" stroke-width="0.7"/>
<text x="872.25" y="384.5" text-anchor="middle" font-family="Liberation Serif, serif" font-size="11" fill="#5c5c5c">X</text>
<text x="884" y="384.4" font-family='"Liberation Sans", sans-serif' font-weight="bold" font-size="10.6" fill="#5a5a5a">Flat Map</text>
<rect x="528" y="388.5" width="43.5" height="23.5" fill="#fdebd3" stroke="#b8aa98" stroke-width="0.6"/>
<text x="538" y="405" font-family='"Liberation Sans", sans-serif' font-size="11.6" fill="#2e2a26" stroke="#2e2a26" stroke-width="0.25">View</text>
<rect x="527.5" y="412" width="11.5" height="387" fill="#a6a6a6"/>
<rect x="527.3" y="412" width="1.2" height="387" fill="#5c5c5c"/>
<rect x="537.6" y="412" width="1.2" height="387" fill="#d4d4d4"/>
<path d="M529.6,420.5L533.2,413.5L536.8000000000001,420.5Z" fill="#e6e6e6" stroke="#7a7a7a" stroke-width="0.5"/>
<rect x="529.2" y="420.5" width="8" height="1" fill="#6a6a6a"/>
<rect x="529.2" y="648" width="8.0" height="33" fill="#c4c4c4"/>
<path d="M529.7,681V648.5H537.2" stroke="#f0f0f0" stroke-width="1" fill="none"/>
<path d="M530.2,680.5H536.7V649" stroke="#7c7c7c" stroke-width="1" fill="none"/>
<clipPath id="fmclip"><rect x="539" y="388.5" width="661" height="410.5"/></clipPath>
<g clip-path="url(#fmclip)">
<path d="M1042.1,536.9L1063.8,574.4M933.6,499.3L977.0,499.3M1150.6,574.4L1172.3,611.9M1042.1,611.9L1085.5,611.9M1128.9,686.9L1172.3,686.9M586.4,649.4L608.1,686.9M846.8,724.5L868.5,762.0M760.0,499.3L803.4,499.3M1194.0,574.4L1237.4,574.4M998.7,686.9L977.0,724.5M781.7,611.9L825.1,611.9M1172.3,536.9L1215.7,536.9M673.2,649.4L716.6,649.4M1085.5,536.9L1107.2,574.4M629.8,499.3L608.1,536.9M738.3,686.9L716.6,724.5M868.5,611.9L846.8,649.4M738.3,536.9L716.6,574.4M673.2,499.3L694.9,536.9M825.1,611.9L868.5,611.9M825.1,536.9L846.8,574.4M1063.8,574.4L1107.2,574.4M1107.2,649.4L1150.6,649.4M868.5,686.9L846.8,724.5M1063.8,649.4L1042.1,686.9M977.0,724.5L1020.4,724.5M890.2,574.4L868.5,611.9M738.3,611.9L716.6,649.4M803.4,574.4L846.8,574.4M1215.7,461.8L1237.4,499.3M716.6,724.5L760.0,724.5M629.8,574.4L608.1,611.9M694.9,461.8L673.2,499.3M1085.5,461.8L1063.8,499.3M933.6,649.4L911.9,686.9M1237.4,574.4L1215.7,611.9M1194.0,499.3L1237.4,499.3M629.8,499.3L673.2,499.3M955.3,686.9L998.7,686.9M673.2,649.4L651.5,686.9M760.0,574.4L781.7,611.9M1063.8,424.3L1085.5,461.8M1367.6,574.4L1345.9,611.9M933.6,574.4L955.3,611.9M760.0,649.4L738.3,686.9M911.9,461.8L955.3,461.8M1107.2,499.3L1085.5,536.9M1345.9,611.9L1324.2,649.4M1215.7,536.9L1194.0,574.4M998.7,686.9L1042.1,686.9M738.3,611.9L781.7,611.9M1345.9,536.9L1367.6,574.4M673.2,424.3L694.9,461.8M1345.9,536.9L1324.2,574.4M651.5,611.9L694.9,611.9M738.3,686.9L781.7,686.9M651.5,461.8L673.2,499.3M825.1,686.9L846.8,724.5M1128.9,536.9L1172.3,536.9M1237.4,649.4L1280.8,649.4M1172.3,461.8L1194.0,499.3M694.9,611.9L738.3,611.9M933.6,649.4L977.0,649.4M1324.2,574.4L1367.6,574.4M1237.4,499.3L1259.1,536.9M694.9,536.9L673.2,574.4M1237.4,574.4L1280.8,574.4M1150.6,499.3L1194.0,499.3M651.5,536.9L673.2,574.4M1259.1,611.9L1302.5,611.9M673.2,574.4L716.6,574.4M1020.4,649.4L1042.1,686.9M1063.8,649.4L1107.2,649.4M716.6,649.4L738.3,686.9M1128.9,611.9L1172.3,611.9M586.4,724.5L629.8,724.5M803.4,649.4L825.1,686.9M781.7,536.9L803.4,574.4M911.9,461.8L890.2,499.3M760.0,499.3L738.3,536.9M955.3,461.8L933.6,499.3M1259.1,536.9L1280.8,574.4M564.7,686.9L608.1,686.9M586.4,574.4L608.1,611.9M694.9,536.9L716.6,574.4M1085.5,611.9L1063.8,649.4M694.9,686.9L738.3,686.9M608.1,686.9L651.5,686.9M955.3,536.9L933.6,574.4M825.1,461.8L803.4,499.3M1107.2,574.4L1085.5,611.9M1215.7,611.9L1194.0,649.4M1085.5,536.9L1063.8,574.4M846.8,574.4L825.1,611.9M1107.2,499.3L1128.9,536.9M716.6,499.3L694.9,536.9M1280.8,574.4L1324.2,574.4M825.1,536.9L803.4,574.4M846.8,499.3L868.5,536.9M738.3,536.9L760.0,574.4M1172.3,611.9L1150.6,649.4M629.8,724.5L608.1,762.0M543.0,649.4L586.4,649.4M1107.2,574.4L1128.9,611.9M977.0,574.4L998.7,611.9M1020.4,574.4L1042.1,611.9M846.8,649.4L890.2,649.4M803.4,499.3L825.1,536.9M890.2,649.4L933.6,649.4M1194.0,424.3L1215.7,461.8M716.6,574.4L760.0,574.4M716.6,499.3L738.3,536.9M1237.4,499.3L1215.7,536.9M998.7,611.9L1020.4,649.4M955.3,611.9L998.7,611.9M1302.5,536.9L1324.2,574.4M1172.3,611.9L1194.0,649.4M1150.6,724.5L1128.9,762.0M998.7,536.9L1020.4,574.4M868.5,611.9L911.9,611.9M1020.4,649.4L998.7,686.9M911.9,611.9L955.3,611.9M1194.0,499.3L1215.7,536.9M1042.1,611.9L1063.8,649.4M1194.0,499.3L1172.3,536.9M1302.5,611.9L1280.8,649.4M977.0,649.4L1020.4,649.4M846.8,574.4L890.2,574.4M1042.1,461.8L1085.5,461.8M955.3,611.9L933.6,649.4M911.9,461.8L933.6,499.3M760.0,499.3L781.7,536.9M1150.6,649.4L1194.0,649.4M694.9,611.9L673.2,649.4M608.1,611.9L629.8,649.4M1215.7,536.9L1259.1,536.9M890.2,574.4L933.6,574.4M1020.4,724.5L998.7,762.0M760.0,574.4L803.4,574.4M1042.1,536.9L1085.5,536.9M781.7,611.9L760.0,649.4M1107.2,724.5L1128.9,762.0M760.0,724.5L738.3,762.0M890.2,649.4L868.5,686.9M716.6,574.4L694.9,611.9M586.4,649.4L629.8,649.4M825.1,611.9L803.4,649.4M760.0,574.4L738.3,611.9M1063.8,424.3L1042.1,461.8M1172.3,461.8L1150.6,499.3M868.5,536.9L890.2,574.4M911.9,536.9L933.6,574.4M694.9,461.8L716.6,499.3M1085.5,461.8L1107.2,499.3M1324.2,574.4L1302.5,611.9M846.8,499.3L825.1,536.9M651.5,461.8L694.9,461.8M977.0,649.4L955.3,686.9M1063.8,499.3L1107.2,499.3M1302.5,611.9L1324.2,649.4M564.7,611.9L543.0,649.4M933.6,424.3L911.9,461.8M781.7,461.8L825.1,461.8M1042.1,536.9L1020.4,574.4M1302.5,536.9L1280.8,574.4M868.5,686.9L890.2,724.5M608.1,536.9L629.8,574.4M586.4,649.4L564.7,686.9M933.6,499.3L911.9,536.9M651.5,611.9L673.2,649.4M629.8,574.4L651.5,611.9M955.3,536.9L977.0,574.4M977.0,499.3L955.3,536.9M1194.0,574.4L1172.3,611.9M1085.5,536.9L1128.9,536.9M933.6,574.4L977.0,574.4M890.2,499.3L911.9,536.9M933.6,649.4L955.3,686.9M1324.2,574.4L1345.9,611.9M890.2,724.5L868.5,762.0M1215.7,611.9L1237.4,649.4M629.8,649.4L608.1,686.9M825.1,536.9L868.5,536.9M1237.4,574.4L1259.1,611.9M1020.4,499.3L1042.1,536.9M825.1,686.9L868.5,686.9M564.7,611.9L608.1,611.9M781.7,611.9L803.4,649.4M1345.9,536.9L1389.3,536.9M1172.3,536.9L1194.0,574.4M1172.3,686.9L1150.6,724.5M1172.3,536.9L1150.6,574.4M673.2,649.4L694.9,686.9M760.0,649.4L803.4,649.4M1085.5,611.9L1128.9,611.9M1259.1,611.9L1280.8,649.4M1042.1,461.8L1020.4,499.3M543.0,649.4L564.7,686.9M1194.0,649.4L1237.4,649.4M911.9,611.9L890.2,649.4M1194.0,574.4L1215.7,611.9M1085.5,686.9L1128.9,686.9M673.2,424.3L651.5,461.8M781.7,461.8L760.0,499.3M1172.3,461.8L1215.7,461.8M1194.0,424.3L1172.3,461.8M738.3,611.9L760.0,649.4M1150.6,574.4L1194.0,574.4M564.7,686.9L586.4,724.5M629.8,649.4L651.5,686.9M738.3,536.9L781.7,536.9M1042.1,686.9L1020.4,724.5M977.0,724.5L998.7,762.0M825.1,461.8L846.8,499.3M977.0,574.4L1020.4,574.4M651.5,536.9L694.9,536.9M803.4,499.3L846.8,499.3M1020.4,649.4L1063.8,649.4M716.6,724.5L738.3,762.0M1107.2,649.4L1128.9,686.9M673.2,499.3L716.6,499.3M1042.1,611.9L1020.4,649.4M1107.2,649.4L1085.5,686.9M933.6,574.4L911.9,611.9M998.7,611.9L1042.1,611.9M781.7,536.9L825.1,536.9M977.0,574.4L955.3,611.9M803.4,499.3L781.7,536.9M694.9,536.9L738.3,536.9M781.7,536.9L760.0,574.4M1194.0,649.4L1172.3,686.9M933.6,499.3L955.3,536.9M781.7,686.9L760.0,724.5M629.8,499.3L651.5,536.9M1128.9,686.9L1150.6,724.5M1063.8,574.4L1042.1,611.9M651.5,611.9L629.8,649.4M651.5,461.8L629.8,499.3M1063.8,499.3L1042.1,536.9M1389.3,536.9L1367.6,574.4M803.4,574.4L781.7,611.9M911.9,536.9L890.2,574.4M825.1,611.9L846.8,649.4M1107.2,574.4L1150.6,574.4M651.5,536.9L629.8,574.4M998.7,686.9L1020.4,724.5M1128.9,536.9L1150.6,574.4M998.7,611.9L977.0,649.4M1063.8,574.4L1085.5,611.9M846.8,649.4L825.1,686.9M738.3,686.9L760.0,724.5M868.5,611.9L890.2,649.4M846.8,724.5L890.2,724.5M911.9,611.9L933.6,649.4M803.4,649.4L846.8,649.4M803.4,574.4L825.1,611.9M846.8,574.4L868.5,611.9M1259.1,536.9L1302.5,536.9M694.9,611.9L716.6,649.4M803.4,424.3L781.7,461.8M1150.6,649.4L1172.3,686.9M933.6,424.3L955.3,461.8M1063.8,649.4L1085.5,686.9M1302.5,611.9L1345.9,611.9M1128.9,611.9L1150.6,649.4M586.4,724.5L608.1,762.0M890.2,574.4L911.9,611.9M1172.3,611.9L1215.7,611.9M1302.5,536.9L1345.9,536.9M998.7,536.9L1042.1,536.9M890.2,649.4L911.9,686.9M911.9,686.9L890.2,724.5M1280.8,649.4L1324.2,649.4M955.3,686.9L977.0,724.5M1128.9,611.9L1107.2,649.4M608.1,611.9L651.5,611.9M651.5,686.9L629.8,724.5M998.7,536.9L977.0,574.4M868.5,686.9L911.9,686.9M564.7,611.9L586.4,649.4M629.8,649.4L673.2,649.4M716.6,649.4L760.0,649.4M1280.8,574.4L1259.1,611.9M977.0,649.4L998.7,686.9M586.4,574.4L629.8,574.4M629.8,574.4L673.2,574.4M955.3,536.9L998.7,536.9M803.4,649.4L781.7,686.9M716.6,649.4L694.9,686.9M1020.4,574.4L998.7,611.9M1150.6,499.3L1128.9,536.9M1128.9,686.9L1107.2,724.5M1259.1,611.9L1237.4,649.4M1259.1,536.9L1237.4,574.4M673.2,574.4L651.5,611.9M1063.8,499.3L1085.5,536.9M673.2,499.3L651.5,536.9M1215.7,611.9L1259.1,611.9M586.4,574.4L564.7,611.9M890.2,499.3L868.5,536.9M868.5,536.9L911.9,536.9M1150.6,574.4L1128.9,611.9M1280.8,574.4L1302.5,611.9M1020.4,499.3L998.7,536.9M1128.9,536.9L1107.2,574.4M846.8,649.4L868.5,686.9M1150.6,499.3L1172.3,536.9M608.1,686.9L586.4,724.5M608.1,611.9L586.4,649.4M673.2,574.4L694.9,611.9M716.6,574.4L738.3,611.9M977.0,499.3L998.7,536.9M955.3,611.9L977.0,649.4M803.4,424.3L825.1,461.8M1150.6,649.4L1128.9,686.9M694.9,686.9L716.6,724.5M1020.4,574.4L1063.8,574.4M1042.1,461.8L1063.8,499.3M608.1,686.9L629.8,724.5M608.1,536.9L651.5,536.9M955.3,461.8L977.0,499.3M1107.2,724.5L1150.6,724.5M1215.7,461.8L1194.0,499.3M890.2,499.3L933.6,499.3M760.0,649.4L781.7,686.9M1085.5,611.9L1107.2,649.4M868.5,536.9L846.8,574.4M781.7,461.8L803.4,499.3M1215.7,536.9L1237.4,574.4M608.1,536.9L586.4,574.4M1020.4,499.3L1063.8,499.3M1085.5,686.9L1107.2,724.5M911.9,536.9L955.3,536.9" stroke="#bdbdbd" stroke-width="0.95" fill="none"/>
<rect x="669.9" y="563.4" width="2.9" height="2.9" rx="0.7" fill="#cfe070"/>
<rect x="678.8" y="573.0" width="2.9" height="2.9" rx="0.7" fill="#cfe070"/>
<rect x="677.2" y="576.1" width="2.9" height="2.9" rx="0.7" fill="#eee070"/>
<rect x="681.0" y="582.0" width="2.9" height="2.9" rx="0.7" fill="#f2b452"/>
<rect x="687.4" y="582.0" width="2.9" height="2.9" rx="0.7" fill="#f2b452"/>
<rect x="655.3" y="582.0" width="2.9" height="2.9" rx="0.7" fill="#eee070"/>
<rect x="656.9" y="586.0" width="2.9" height="2.9" rx="0.7" fill="#eee070"/>
<rect x="660.6" y="586.0" width="2.9" height="2.9" rx="0.7" fill="#eee070"/>
<rect x="668.1" y="586.0" width="2.9" height="2.9" rx="0.7" fill="#f2b452"/>
<rect x="671.4" y="586.0" width="2.9" height="2.9" rx="0.7" fill="#f2b452"/>
<rect x="669.6" y="589.2" width="2.9" height="2.9" rx="0.7" fill="#f2b452"/>
<rect x="677.2" y="589.0" width="2.9" height="2.9" rx="0.7" fill="#f2b452"/>
<rect x="685.0" y="589.0" width="2.9" height="2.9" rx="0.7" fill="#f2b452"/>
<rect x="664.4" y="591.9" width="2.9" height="2.9" rx="0.7" fill="#70d070"/>
<rect x="672.0" y="591.9" width="2.9" height="2.9" rx="0.7" fill="#f2b452"/>
<rect x="686.3" y="592.7" width="2.9" height="2.9" rx="0.7" fill="#f2b452"/>
<rect x="661.3" y="595.8" width="2.9" height="2.9" rx="0.7" fill="#eee070"/>
<rect x="660.0" y="598.9" width="2.9" height="2.9" rx="0.7" fill="#eee070"/>
<rect x="671.4" y="598.9" width="2.9" height="2.9" rx="0.7" fill="#f09c44"/>
<rect x="675.1" y="598.9" width="2.9" height="2.9" rx="0.7" fill="#f2b452"/>
<rect x="683.2" y="598.9" width="2.9" height="2.9" rx="0.7" fill="#eee070"/>
<rect x="687.6" y="595.8" width="2.9" height="2.9" rx="0.7" fill="#f2b452"/>
<rect x="669.6" y="601.9" width="2.9" height="2.9" rx="0.7" fill="#f2b452"/>
<rect x="677.9" y="601.9" width="2.9" height="2.9" rx="0.7" fill="#f09c44"/>
<rect x="681.6" y="601.9" width="2.9" height="2.9" rx="0.7" fill="#f2b452"/>
<rect x="685.4" y="601.9" width="2.9" height="2.9" rx="0.7" fill="#f2b452"/>
<rect x="679.7" y="605.0" width="2.9" height="2.9" rx="0.7" fill="#f09c44"/>
<rect x="687.4" y="605.0" width="2.9" height="2.9" rx="0.7" fill="#f2b452"/>
<rect x="685.4" y="608.1" width="2.9" height="2.9" rx="0.7" fill="#f09c44"/>
<rect x="622.9" y="587.5" width="2.9" height="2.9" rx="0.7" fill="#eee070"/>
<rect x="606.1" y="591.4" width="2.9" height="2.9" rx="0.7" fill="#eee070"/>
<rect x="627.3" y="594.3" width="2.9" height="2.9" rx="0.7" fill="#eee070"/>
<rect x="641.6" y="601.9" width="2.9" height="2.9" rx="0.7" fill="#cfe070"/>
<rect x="634.8" y="607.8" width="2.9" height="2.9" rx="0.7" fill="#eee070"/>
<rect x="623.4" y="613.8" width="2.9" height="2.9" rx="0.7" fill="#eee070"/>
<rect x="626.7" y="613.8" width="2.9" height="2.9" rx="0.7" fill="#eee070"/>
<rect x="631.1" y="613.3" width="2.9" height="2.9" rx="0.7" fill="#f2b452"/>
<rect x="632.8" y="616.4" width="2.9" height="2.9" rx="0.7" fill="#eee070"/>
<rect x="610.0" y="616.8" width="2.9" height="2.9" rx="0.7" fill="#cfe070"/>
<rect x="608.5" y="620.3" width="2.9" height="2.9" rx="0.7" fill="#eee070"/>
<rect x="625.2" y="623.2" width="2.9" height="2.9" rx="0.7" fill="#eee070"/>
<rect x="636.3" y="622.4" width="2.9" height="2.9" rx="0.7" fill="#eee070"/>
<rect x="640.4" y="622.4" width="2.9" height="2.9" rx="0.7" fill="#cfe070"/>
<rect x="648.0" y="627.3" width="2.9" height="2.9" rx="0.7" fill="#eee070"/>
<rect x="656.9" y="613.3" width="2.9" height="2.9" rx="0.7" fill="#f2b452"/>
<rect x="663.7" y="613.3" width="2.9" height="2.9" rx="0.7" fill="#f2b452"/>
<rect x="667.6" y="613.3" width="2.9" height="2.9" rx="0.7" fill="#f09c44"/>
<rect x="658.7" y="616.8" width="2.9" height="2.9" rx="0.7" fill="#f2b452"/>
<rect x="662.2" y="616.8" width="2.9" height="2.9" rx="0.7" fill="#f2b452"/>
<rect x="665.9" y="616.8" width="2.9" height="2.9" rx="0.7" fill="#f2b452"/>
<rect x="660.0" y="620.8" width="2.9" height="2.9" rx="0.7" fill="#f2b452"/>
<rect x="668.3" y="620.8" width="2.9" height="2.9" rx="0.7" fill="#eee070"/>
<rect x="675.1" y="620.8" width="2.9" height="2.9" rx="0.7" fill="#eee070"/>
<rect x="662.0" y="624.5" width="2.9" height="2.9" rx="0.7" fill="#f09c44"/>
<rect x="665.9" y="624.5" width="2.9" height="2.9" rx="0.7" fill="#f2b452"/>
<rect x="673.6" y="624.5" width="2.9" height="2.9" rx="0.7" fill="#eee070"/>
<rect x="677.5" y="616.8" width="2.9" height="2.9" rx="0.7" fill="#eee070"/>
<rect x="681.3" y="616.8" width="2.9" height="2.9" rx="0.7" fill="#f2b452"/>
<rect x="685.0" y="616.8" width="2.9" height="2.9" rx="0.7" fill="#f2b452"/>
<rect x="683.6" y="613.3" width="2.9" height="2.9" rx="0.7" fill="#f09c44"/>
<rect x="686.7" y="613.3" width="2.9" height="2.9" rx="0.7" fill="#f2b452"/>
<rect x="683.2" y="620.8" width="2.9" height="2.9" rx="0.7" fill="#f2b452"/>
<rect x="681.0" y="624.5" width="2.9" height="2.9" rx="0.7" fill="#f2b452"/>
<rect x="1055.8" y="572.9" width="2.9" height="2.9" rx="0.7" fill="#70d070"/>
<rect x="1068.1" y="576.1" width="2.9" height="2.9" rx="0.7" fill="#eee070"/>
<rect x="1065.8" y="579.2" width="2.9" height="2.9" rx="0.7" fill="#eee070"/>
<rect x="1077.4" y="579.2" width="2.9" height="2.9" rx="0.7" fill="#58b8b0"/>
<rect x="1081.2" y="586.1" width="2.9" height="2.9" rx="0.7" fill="#70d070"/>
<rect x="1092.6" y="585.2" width="2.9" height="2.9" rx="0.7" fill="#eee070"/>
<rect x="1083.9" y="592.7" width="2.9" height="2.9" rx="0.7" fill="#eee070"/>
<rect x="1098.4" y="569.9" width="2.9" height="2.9" rx="0.7" fill="#eee070"/>
<rect x="1116.3" y="578.2" width="2.9" height="2.9" rx="0.7" fill="#70d070"/>
<rect x="1113.6" y="581.3" width="2.9" height="2.9" rx="0.7" fill="#eee070"/>
<rect x="1109.3" y="604.1" width="2.9" height="2.9" rx="0.7" fill="#eee070"/>
<rect x="1090.0" y="605.0" width="2.9" height="2.9" rx="0.7" fill="#a0c8f0"/>
<rect x="1091.7" y="608.0" width="2.9" height="2.9" rx="0.7" fill="#c8e0f8"/>
<rect x="1095.6" y="608.0" width="2.9" height="2.9" rx="0.7" fill="#c8e0f8"/>
<rect x="1093.8" y="616.0" width="2.9" height="2.9" rx="0.7" fill="#eee070"/>
<rect x="1094.9" y="633.6" width="2.9" height="2.9" rx="0.7" fill="#eee070"/>
<rect x="1003.2" y="607.1" width="2.9" height="2.9" rx="0.7" fill="#6890e8"/>
<rect x="1004.5" y="610.2" width="2.9" height="2.9" rx="0.7" fill="#eee070"/>
<rect x="1017.3" y="633.6" width="2.9" height="2.9" rx="0.7" fill="#eee070"/>
<rect x="963.8" y="640.4" width="2.9" height="2.9" rx="0.7" fill="#70d070"/>
<rect x="960.0" y="654.9" width="2.9" height="2.9" rx="0.7" fill="#eee070"/>
<rect x="991.5" y="669.3" width="2.9" height="2.9" rx="0.7" fill="#58b8b0"/>
<rect x="995.4" y="669.3" width="2.9" height="2.9" rx="0.7" fill="#58b8b0"/>
<rect x="999.2" y="669.3" width="2.9" height="2.9" rx="0.7" fill="#58b8b0"/>
<rect x="1021.3" y="662.3" width="2.9" height="2.9" rx="0.7" fill="#eee070"/>
<rect x="1025.1" y="669.3" width="2.9" height="2.9" rx="0.7" fill="#eee070"/>
<rect x="1037.8" y="675.1" width="2.9" height="2.9" rx="0.7" fill="#eee070"/>
<rect x="982.7" y="692.1" width="2.9" height="2.9" rx="0.7" fill="#70d070"/>
<rect x="1097.9" y="673.7" width="2.9" height="2.9" rx="0.7" fill="#eee070"/>
<rect x="1103.7" y="676.0" width="2.9" height="2.9" rx="0.7" fill="#eee070"/>
<rect x="1097.9" y="691.2" width="2.9" height="2.9" rx="0.7" fill="#eee070"/>
<rect x="1101.9" y="691.2" width="2.9" height="2.9" rx="0.7" fill="#eee070"/>
<rect x="1107.5" y="689.1" width="2.9" height="2.9" rx="0.7" fill="#eee070"/>
<rect x="1118.0" y="689.1" width="2.9" height="2.9" rx="0.7" fill="#eee070"/>
<rect x="1176.7" y="562.9" width="2.9" height="2.9" rx="0.7" fill="#eee070"/>
<rect x="1178.5" y="566.4" width="2.9" height="2.9" rx="0.7" fill="#eee070"/>
<rect x="1145.7" y="574.0" width="2.9" height="2.9" rx="0.7" fill="#eee070"/>
<rect x="1147.8" y="577.0" width="2.9" height="2.9" rx="0.7" fill="#eee070"/>
<rect x="1187.3" y="576.1" width="2.9" height="2.9" rx="0.7" fill="#70d070"/>
<rect x="1147.8" y="587.5" width="2.9" height="2.9" rx="0.7" fill="#58b8b0"/>
<rect x="1169.2" y="589.2" width="2.9" height="2.9" rx="0.7" fill="#eee070"/>
<rect x="1175.9" y="589.2" width="2.9" height="2.9" rx="0.7" fill="#eee070"/>
<rect x="1169.2" y="595.7" width="2.9" height="2.9" rx="0.7" fill="#eee070"/>
<rect x="1167.5" y="599.2" width="2.9" height="2.9" rx="0.7" fill="#70d070"/>
<rect x="1172.7" y="606.2" width="2.9" height="2.9" rx="0.7" fill="#58b8b0"/>
<rect x="1165.4" y="634.3" width="2.9" height="2.9" rx="0.7" fill="#eee070"/>
<rect x="1141.7" y="645.7" width="2.9" height="2.9" rx="0.7" fill="#eee070"/>
<rect x="1189.0" y="651.1" width="2.9" height="2.9" rx="0.7" fill="#e85838"/>
<rect x="583.9" y="699.3" width="2.9" height="2.9" rx="0.7" fill="#58b8b0"/>
<rect x="589.3" y="701.7" width="2.9" height="2.9" rx="0.7" fill="#eee070"/>
<rect x="622.8" y="708.7" width="2.9" height="2.9" rx="0.7" fill="#eee070"/>
<rect x="604.4" y="729.7" width="2.9" height="2.9" rx="0.7" fill="#cfe070"/>
<rect x="761.0" y="715.5" width="2.9" height="2.9" rx="0.7" fill="#cfe070"/>
<rect x="738.6" y="729.7" width="2.9" height="2.9" rx="0.7" fill="#58b8b0"/>
<rect x="970.6" y="708.7" width="2.9" height="2.9" rx="0.7" fill="#eee070"/>
<rect x="995.4" y="701.7" width="2.9" height="2.9" rx="0.7" fill="#eee070"/>
<rect x="987.3" y="714.6" width="2.9" height="2.9" rx="0.7" fill="#eee070"/>
<rect x="879.3" y="726.2" width="2.9" height="2.9" rx="0.7" fill="#70d070"/>
<rect x="1102.3" y="705.4" width="2.9" height="2.9" rx="0.7" fill="#eee070"/>
<rect x="713.1" y="569.9" width="2.9" height="2.9" rx="0.7" fill="#cfe070"/>
<rect x="701.7" y="578.5" width="2.9" height="2.9" rx="0.7" fill="#eee070"/>
<rect x="728.9" y="578.5" width="2.9" height="2.9" rx="0.7" fill="#cfe070"/>
<rect x="748.6" y="569.9" width="2.9" height="2.9" rx="0.7" fill="#eee070"/>
<rect x="766.6" y="564.2" width="2.9" height="2.9" rx="0.7" fill="#58b8b0"/>
<rect x="752.4" y="578.5" width="2.9" height="2.9" rx="0.7" fill="#eee070"/>
<rect x="756.9" y="577.0" width="2.9" height="2.9" rx="0.7" fill="#cfe070"/>
<rect x="742.5" y="587.5" width="2.9" height="2.9" rx="0.7" fill="#eee070"/>
<rect x="749.9" y="594.3" width="2.9" height="2.9" rx="0.7" fill="#eee070"/>
<rect x="692.5" y="589.0" width="2.9" height="2.9" rx="0.7" fill="#eee070"/>
<rect x="700.8" y="592.7" width="2.9" height="2.9" rx="0.7" fill="#f2b452"/>
<rect x="704.3" y="591.9" width="2.9" height="2.9" rx="0.7" fill="#70d070"/>
<rect x="698.6" y="595.8" width="2.9" height="2.9" rx="0.7" fill="#70d070"/>
<rect x="705.6" y="594.9" width="2.9" height="2.9" rx="0.7" fill="#cfe070"/>
<rect x="691.6" y="595.8" width="2.9" height="2.9" rx="0.7" fill="#f2b452"/>
<rect x="707.0" y="598.2" width="2.9" height="2.9" rx="0.7" fill="#f2b452"/>
<rect x="689.4" y="599.6" width="2.9" height="2.9" rx="0.7" fill="#f09c44"/>
<rect x="693.4" y="599.6" width="2.9" height="2.9" rx="0.7" fill="#f09c44"/>
<rect x="695.6" y="602.8" width="2.9" height="2.9" rx="0.7" fill="#f2b452"/>
<rect x="699.5" y="605.0" width="2.9" height="2.9" rx="0.7" fill="#f2b452"/>
<rect x="703.0" y="605.0" width="2.9" height="2.9" rx="0.7" fill="#f2b452"/>
<rect x="707.0" y="605.0" width="2.9" height="2.9" rx="0.7" fill="#f2b452"/>
<rect x="704.8" y="601.9" width="2.9" height="2.9" rx="0.7" fill="#f2b452"/>
<rect x="695.6" y="606.6" width="2.9" height="2.9" rx="0.7" fill="#eee070"/>
<rect x="704.8" y="608.1" width="2.9" height="2.9" rx="0.7" fill="#f2b452"/>
<rect x="689.4" y="609.4" width="2.9" height="2.9" rx="0.7" fill="#eee070"/>
<rect x="693.4" y="610.3" width="2.9" height="2.9" rx="0.7" fill="#70d070"/>
<rect x="718.3" y="597.3" width="2.9" height="2.9" rx="0.7" fill="#eee070"/>
<rect x="723.6" y="594.3" width="2.9" height="2.9" rx="0.7" fill="#cfe070"/>
<rect x="723.6" y="601.1" width="2.9" height="2.9" rx="0.7" fill="#cfe070"/>
<rect x="728.9" y="603.9" width="2.9" height="2.9" rx="0.7" fill="#cfe070"/>
<rect x="719.7" y="607.2" width="2.9" height="2.9" rx="0.7" fill="#eee070"/>
<rect x="729.6" y="610.3" width="2.9" height="2.9" rx="0.7" fill="#f09c44"/>
<rect x="732.8" y="610.3" width="2.9" height="2.9" rx="0.7" fill="#f2b452"/>
<rect x="737.2" y="610.3" width="2.9" height="2.9" rx="0.7" fill="#cfe070"/>
<rect x="695.6" y="613.3" width="2.9" height="2.9" rx="0.7" fill="#f09c44"/>
<rect x="704.8" y="613.3" width="2.9" height="2.9" rx="0.7" fill="#f2b452"/>
<rect x="699.5" y="616.4" width="2.9" height="2.9" rx="0.7" fill="#cfe070"/>
<rect x="710.9" y="616.4" width="2.9" height="2.9" rx="0.7" fill="#eee070"/>
<rect x="714.4" y="616.8" width="2.9" height="2.9" rx="0.7" fill="#eee070"/>
<rect x="719.7" y="613.9" width="2.9" height="2.9" rx="0.7" fill="#f2b452"/>
<rect x="723.6" y="613.9" width="2.9" height="2.9" rx="0.7" fill="#eee070"/>
<rect x="727.6" y="613.9" width="2.9" height="2.9" rx="0.7" fill="#eee070"/>
<rect x="721.9" y="617.1" width="2.9" height="2.9" rx="0.7" fill="#f2b452"/>
<rect x="729.0" y="617.1" width="2.9" height="2.9" rx="0.7" fill="#f2b452"/>
<rect x="716.2" y="620.2" width="2.9" height="2.9" rx="0.7" fill="#eee070"/>
<rect x="703.4" y="622.4" width="2.9" height="2.9" rx="0.7" fill="#f2b452"/>
<rect x="707.0" y="622.4" width="2.9" height="2.9" rx="0.7" fill="#eee070"/>
<rect x="710.9" y="623.2" width="2.9" height="2.9" rx="0.7" fill="#eee070"/>
<rect x="714.4" y="623.2" width="2.9" height="2.9" rx="0.7" fill="#eee070"/>
<rect x="689.4" y="624.5" width="2.9" height="2.9" rx="0.7" fill="#f09c44"/>
<rect x="693.8" y="624.5" width="2.9" height="2.9" rx="0.7" fill="#eee070"/>
<rect x="691.2" y="627.3" width="2.9" height="2.9" rx="0.7" fill="#f09c44"/>
<rect x="716.2" y="626.9" width="2.9" height="2.9" rx="0.7" fill="#f2b452"/>
<rect x="719.7" y="626.9" width="2.9" height="2.9" rx="0.7" fill="#eee070"/>
<rect x="723.6" y="626.0" width="2.9" height="2.9" rx="0.7" fill="#eee070"/>
<rect x="731.1" y="626.9" width="2.9" height="2.9" rx="0.7" fill="#f2b452"/>
<rect x="740.3" y="623.2" width="2.9" height="2.9" rx="0.7" fill="#eee070"/>
<rect x="771.8" y="619.2" width="2.9" height="2.9" rx="0.7" fill="#cfe070"/>
<rect x="779.7" y="624.5" width="2.9" height="2.9" rx="0.7" fill="#eee070"/>
<rect x="664.4" y="629.3" width="2.9" height="2.9" rx="0.7" fill="#f2b452"/>
<rect x="668.3" y="629.3" width="2.9" height="2.9" rx="0.7" fill="#f2b452"/>
<rect x="672.2" y="629.3" width="2.9" height="2.9" rx="0.7" fill="#eee070"/>
<rect x="675.3" y="629.3" width="2.9" height="2.9" rx="0.7" fill="#eee070"/>
<rect x="678.8" y="629.3" width="2.9" height="2.9" rx="0.7" fill="#f2b452"/>
<rect x="686.7" y="629.0" width="2.9" height="2.9" rx="0.7" fill="#f2b452"/>
<rect x="633.2" y="633.4" width="2.9" height="2.9" rx="0.7" fill="#f09c44"/>
<rect x="631.5" y="636.9" width="2.9" height="2.9" rx="0.7" fill="#58b8b0"/>
<rect x="626.4" y="639.8" width="2.9" height="2.9" rx="0.7" fill="#eee070"/>
<rect x="643.9" y="641.3" width="2.9" height="2.9" rx="0.7" fill="#eee070"/>
<rect x="637.8" y="644.3" width="2.9" height="2.9" rx="0.7" fill="#eee070"/>
<rect x="648.6" y="634.5" width="2.9" height="2.9" rx="0.7" fill="#f2b452"/>
<rect x="654.7" y="631.4" width="2.9" height="2.9" rx="0.7" fill="#eee070"/>
<rect x="661.3" y="636.0" width="2.9" height="2.9" rx="0.7" fill="#eee070"/>
<rect x="669.6" y="632.9" width="2.9" height="2.9" rx="0.7" fill="#eee070"/>
<rect x="677.2" y="632.9" width="2.9" height="2.9" rx="0.7" fill="#f2b452"/>
<rect x="671.6" y="636.9" width="2.9" height="2.9" rx="0.7" fill="#f2b452"/>
<rect x="675.3" y="636.9" width="2.9" height="2.9" rx="0.7" fill="#eee070"/>
<rect x="681.9" y="636.0" width="2.9" height="2.9" rx="0.7" fill="#f2b452"/>
<rect x="685.8" y="635.1" width="2.9" height="2.9" rx="0.7" fill="#eee070"/>
<rect x="687.6" y="638.2" width="2.9" height="2.9" rx="0.7" fill="#f2b452"/>
<rect x="675.8" y="646.5" width="2.9" height="2.9" rx="0.7" fill="#eee070"/>
<rect x="667.4" y="651.2" width="2.9" height="2.9" rx="0.7" fill="#eee070"/>
<rect x="675.8" y="651.2" width="2.9" height="2.9" rx="0.7" fill="#f09c44"/>
<rect x="683.2" y="650.3" width="2.9" height="2.9" rx="0.7" fill="#eee070"/>
<rect x="687.6" y="651.2" width="2.9" height="2.9" rx="0.7" fill="#f2b452"/>
<rect x="681.0" y="653.5" width="2.9" height="2.9" rx="0.7" fill="#f2b452"/>
<rect x="684.1" y="657.0" width="2.9" height="2.9" rx="0.7" fill="#cfe070"/>
<rect x="688.0" y="664.5" width="2.9" height="2.9" rx="0.7" fill="#f2b452"/>
<rect x="642.5" y="651.8" width="2.9" height="2.9" rx="0.7" fill="#f2b452"/>
<rect x="659.1" y="657.0" width="2.9" height="2.9" rx="0.7" fill="#cfe070"/>
<rect x="652.4" y="661.0" width="2.9" height="2.9" rx="0.7" fill="#eee070"/>
<rect x="656.9" y="661.0" width="2.9" height="2.9" rx="0.7" fill="#eee070"/>
<rect x="633.2" y="662.3" width="2.9" height="2.9" rx="0.7" fill="#eee070"/>
<rect x="639.4" y="662.3" width="2.9" height="2.9" rx="0.7" fill="#f2b452"/>
<rect x="628.0" y="665.4" width="2.9" height="2.9" rx="0.7" fill="#eee070"/>
<rect x="645.5" y="665.4" width="2.9" height="2.9" rx="0.7" fill="#eee070"/>
<rect x="654.5" y="664.5" width="2.9" height="2.9" rx="0.7" fill="#f09c44"/>
<rect x="656.0" y="667.8" width="2.9" height="2.9" rx="0.7" fill="#f2b452"/>
<rect x="649.2" y="671.5" width="2.9" height="2.9" rx="0.7" fill="#eee070"/>
<rect x="651.5" y="675.4" width="2.9" height="2.9" rx="0.7" fill="#eee070"/>
<rect x="634.8" y="676.8" width="2.9" height="2.9" rx="0.7" fill="#eee070"/>
<rect x="612.0" y="682.0" width="2.9" height="2.9" rx="0.7" fill="#cfe070"/>
<rect x="626.4" y="689.0" width="2.9" height="2.9" rx="0.7" fill="#c8e0f8"/>
<rect x="614.4" y="691.8" width="2.9" height="2.9" rx="0.7" fill="#cfe070"/>
<rect x="643.8" y="691.2" width="2.9" height="2.9" rx="0.7" fill="#cfe070"/>
<rect x="690.7" y="635.1" width="2.9" height="2.9" rx="0.7" fill="#70d070"/>
<rect x="694.7" y="634.2" width="2.9" height="2.9" rx="0.7" fill="#eee070"/>
<rect x="697.1" y="637.3" width="2.9" height="2.9" rx="0.7" fill="#f2b452"/>
<rect x="690.3" y="641.7" width="2.9" height="2.9" rx="0.7" fill="#f2b452"/>
<rect x="694.7" y="641.3" width="2.9" height="2.9" rx="0.7" fill="#f2b452"/>
<rect x="699.5" y="641.3" width="2.9" height="2.9" rx="0.7" fill="#eee070"/>
<rect x="691.6" y="644.8" width="2.9" height="2.9" rx="0.7" fill="#eee070"/>
<rect x="696.3" y="644.8" width="2.9" height="2.9" rx="0.7" fill="#cfe070"/>
<rect x="703.9" y="633.4" width="2.9" height="2.9" rx="0.7" fill="#eee070"/>
<rect x="705.4" y="644.2" width="2.9" height="2.9" rx="0.7" fill="#eee070"/>
<rect x="715.3" y="636.6" width="2.9" height="2.9" rx="0.7" fill="#f09c44"/>
<rect x="713.1" y="639.8" width="2.9" height="2.9" rx="0.7" fill="#eee070"/>
<rect x="713.5" y="644.3" width="2.9" height="2.9" rx="0.7" fill="#eee070"/>
<rect x="720.5" y="633.4" width="2.9" height="2.9" rx="0.7" fill="#f2b452"/>
<rect x="726.4" y="632.9" width="2.9" height="2.9" rx="0.7" fill="#f2b452"/>
<rect x="733.2" y="636.0" width="2.9" height="2.9" rx="0.7" fill="#eee070"/>
<rect x="730.4" y="638.9" width="2.9" height="2.9" rx="0.7" fill="#f2b452"/>
<rect x="728.9" y="642.6" width="2.9" height="2.9" rx="0.7" fill="#f2b452"/>
<rect x="731.9" y="642.6" width="2.9" height="2.9" rx="0.7" fill="#f2b452"/>
<rect x="737.2" y="629.9" width="2.9" height="2.9" rx="0.7" fill="#70d070"/>
<rect x="742.5" y="632.5" width="2.9" height="2.9" rx="0.7" fill="#f2b452"/>
<rect x="746.8" y="632.9" width="2.9" height="2.9" rx="0.7" fill="#eee070"/>
<rect x="739.4" y="645.6" width="2.9" height="2.9" rx="0.7" fill="#f2b452"/>
<rect x="743.3" y="645.6" width="2.9" height="2.9" rx="0.7" fill="#eee070"/>
<rect x="765.7" y="630.7" width="2.9" height="2.9" rx="0.7" fill="#cfe070"/>
<rect x="760.6" y="639.8" width="2.9" height="2.9" rx="0.7" fill="#eee070"/>
<rect x="781.9" y="644.8" width="2.9" height="2.9" rx="0.7" fill="#cfe070"/>
<rect x="719.7" y="647.8" width="2.9" height="2.9" rx="0.7" fill="#f09c44"/>
<rect x="717.6" y="651.3" width="2.9" height="2.9" rx="0.7" fill="#eee070"/>
<rect x="722.7" y="650.3" width="2.9" height="2.9" rx="0.7" fill="#eee070"/>
<rect x="725.2" y="653.5" width="2.9" height="2.9" rx="0.7" fill="#f09c44"/>
<rect x="690.1" y="654.1" width="2.9" height="2.9" rx="0.7" fill="#70d070"/>
<rect x="701.7" y="658.8" width="2.9" height="2.9" rx="0.7" fill="#eee070"/>
<rect x="712.9" y="656.4" width="2.9" height="2.9" rx="0.7" fill="#eee070"/>
<rect x="711.3" y="659.4" width="2.9" height="2.9" rx="0.7" fill="#f09c44"/>
<rect x="715.3" y="659.4" width="2.9" height="2.9" rx="0.7" fill="#eee070"/>
<rect x="716.6" y="662.3" width="2.9" height="2.9" rx="0.7" fill="#eee070"/>
<rect x="720.5" y="662.3" width="2.9" height="2.9" rx="0.7" fill="#eee070"/>
<rect x="694.7" y="661.7" width="2.9" height="2.9" rx="0.7" fill="#cfe070"/>
<rect x="689.4" y="664.5" width="2.9" height="2.9" rx="0.7" fill="#f2b452"/>
<rect x="697.8" y="665.4" width="2.9" height="2.9" rx="0.7" fill="#f2b452"/>
<rect x="695.6" y="668.4" width="2.9" height="2.9" rx="0.7" fill="#f09c44"/>
<rect x="737.2" y="653.5" width="2.9" height="2.9" rx="0.7" fill="#eee070"/>
<rect x="741.8" y="653.5" width="2.9" height="2.9" rx="0.7" fill="#eee070"/>
<rect x="733.2" y="660.1" width="2.9" height="2.9" rx="0.7" fill="#f2b452"/>
<rect x="742.5" y="663.2" width="2.9" height="2.9" rx="0.7" fill="#cfe070"/>
<rect x="721.9" y="672.8" width="2.9" height="2.9" rx="0.7" fill="#eee070"/>
<rect x="720.5" y="676.3" width="2.9" height="2.9" rx="0.7" fill="#eee070"/>
<rect x="694.7" y="678.3" width="2.9" height="2.9" rx="0.7" fill="#cfe070"/>
<rect x="697.1" y="686.0" width="2.9" height="2.9" rx="0.7" fill="#eee070"/>
<rect x="718.3" y="697.8" width="2.9" height="2.9" rx="0.7" fill="#cfe070"/>
<rect x="661.2" y="462.7" width="2.9" height="2.9" rx="0.7" fill="#58b8b0"/>
<rect x="681.9" y="469.0" width="2.9" height="2.9" rx="0.7" fill="#eee070"/>
<rect x="677.4" y="481.6" width="2.9" height="2.9" rx="0.7" fill="#70d070"/>
<rect x="651.6" y="494.3" width="2.9" height="2.9" rx="0.7" fill="#c8e0f8"/>
<rect x="634.1" y="521.6" width="2.9" height="2.9" rx="0.7" fill="#a0c8f0"/>
<rect x="681.9" y="527.2" width="2.9" height="2.9" rx="0.7" fill="#eee070"/>
<rect x="610.4" y="536.8" width="2.9" height="2.9" rx="0.7" fill="#a0c8f0"/>
<rect x="627.6" y="545.1" width="2.9" height="2.9" rx="0.7" fill="#58b8b0"/>
<rect x="676.7" y="540.7" width="2.9" height="2.9" rx="0.7" fill="#70d070"/>
<rect x="694.9" y="539.1" width="2.9" height="2.9" rx="0.7" fill="#cfe070"/>
<rect x="689.3" y="546.8" width="2.9" height="2.9" rx="0.7" fill="#eee070"/>
<rect x="691.9" y="549.6" width="2.9" height="2.9" rx="0.7" fill="#58b8b0"/>
<rect x="677.4" y="556.7" width="2.9" height="2.9" rx="0.7" fill="#f2b452"/>
<rect x="813.7" y="457.5" width="2.9" height="2.9" rx="0.7" fill="#eee070"/>
<rect x="816.9" y="457.1" width="2.9" height="2.9" rx="0.7" fill="#58b8b0"/>
<rect x="794.8" y="478.5" width="2.9" height="2.9" rx="0.7" fill="#6890e8"/>
<rect x="843.1" y="493.9" width="2.9" height="2.9" rx="0.7" fill="#eee070"/>
<rect x="843.8" y="505.3" width="2.9" height="2.9" rx="0.7" fill="#eee070"/>
<rect x="820.4" y="517.9" width="2.9" height="2.9" rx="0.7" fill="#eee070"/>
<rect x="858.9" y="526.3" width="2.9" height="2.9" rx="0.7" fill="#eee070"/>
<rect x="788.3" y="533.3" width="2.9" height="2.9" rx="0.7" fill="#cfe070"/>
<rect x="798.3" y="547.7" width="2.9" height="2.9" rx="0.7" fill="#eee070"/>
<rect x="832.6" y="546.0" width="2.9" height="2.9" rx="0.7" fill="#eee070"/>
<rect x="852.3" y="548.2" width="2.9" height="2.9" rx="0.7" fill="#eee070"/>
<rect x="920.6" y="457.5" width="2.9" height="2.9" rx="0.7" fill="#eee070"/>
<rect x="938.1" y="453.6" width="2.9" height="2.9" rx="0.7" fill="#eee070"/>
<rect x="944.3" y="450.1" width="2.9" height="2.9" rx="0.7" fill="#eee070"/>
<rect x="927.6" y="465.9" width="2.9" height="2.9" rx="0.7" fill="#e85838"/>
<rect x="884.7" y="511.8" width="2.9" height="2.9" rx="0.7" fill="#eee070"/>
<rect x="932.5" y="517.0" width="2.9" height="2.9" rx="0.7" fill="#eee070"/>
<rect x="942.5" y="532.8" width="2.9" height="2.9" rx="0.7" fill="#eee070"/>
<rect x="929.4" y="537.7" width="2.9" height="2.9" rx="0.7" fill="#eee070"/>
<rect x="897.0" y="546.0" width="2.9" height="2.9" rx="0.7" fill="#eee070"/>
<rect x="888.7" y="552.1" width="2.9" height="2.9" rx="0.7" fill="#eee070"/>
<rect x="949.0" y="556.5" width="2.9" height="2.9" rx="0.7" fill="#eee070"/>
<rect x="1029.6" y="521.1" width="2.9" height="2.9" rx="0.7" fill="#58b8b0"/>
<rect x="1041.2" y="524.1" width="2.9" height="2.9" rx="0.7" fill="#70d070"/>
<rect x="1013.5" y="545.1" width="2.9" height="2.9" rx="0.7" fill="#58b8b0"/>
<rect x="1038.9" y="549.6" width="2.9" height="2.9" rx="0.7" fill="#eee070"/>
<rect x="1054.7" y="457.5" width="2.9" height="2.9" rx="0.7" fill="#cfe070"/>
<rect x="1107.8" y="500.9" width="2.9" height="2.9" rx="0.7" fill="#58b8b0"/>
<rect x="1074.5" y="540.7" width="2.9" height="2.9" rx="0.7" fill="#70d070"/>
<rect x="1104.6" y="542.1" width="2.9" height="2.9" rx="0.7" fill="#eee070"/>
<rect x="1118.3" y="540.7" width="2.9" height="2.9" rx="0.7" fill="#eee070"/>
<rect x="1182.6" y="474.6" width="2.9" height="2.9" rx="0.7" fill="#70d070"/>
<rect x="1161.6" y="482.5" width="2.9" height="2.9" rx="0.7" fill="#eee070"/>
<rect x="1179.6" y="481.6" width="2.9" height="2.9" rx="0.7" fill="#eee070"/>
<rect x="1169.1" y="488.7" width="2.9" height="2.9" rx="0.7" fill="#6890e8"/>
<rect x="1164.6" y="495.1" width="2.9" height="2.9" rx="0.7" fill="#eee070"/>
<rect x="1173.0" y="501.3" width="2.9" height="2.9" rx="0.7" fill="#eee070"/>
<rect x="1170.4" y="510.2" width="2.9" height="2.9" rx="0.7" fill="#c8e0f8"/>
<rect x="1194.9" y="507.4" width="2.9" height="2.9" rx="0.7" fill="#eee070"/>
<rect x="1175.6" y="556.5" width="2.9" height="2.9" rx="0.7" fill="#eee070"/>
<rect x="816.6" y="560.3" width="2.9" height="2.9" rx="0.7" fill="#cfe070"/>
<rect x="813.1" y="566.4" width="2.9" height="2.9" rx="0.7" fill="#eee070"/>
<rect x="811.3" y="576.1" width="2.9" height="2.9" rx="0.7" fill="#f09c44"/>
<rect x="849.0" y="574.0" width="2.9" height="2.9" rx="0.7" fill="#cfe070"/>
<rect x="847.3" y="577.0" width="2.9" height="2.9" rx="0.7" fill="#cfe070"/>
<rect x="846.7" y="587.5" width="2.9" height="2.9" rx="0.7" fill="#eee070"/>
<rect x="877.1" y="581.3" width="2.9" height="2.9" rx="0.7" fill="#eee070"/>
<rect x="893.7" y="587.5" width="2.9" height="2.9" rx="0.7" fill="#eee070"/>
<rect x="892.3" y="590.6" width="2.9" height="2.9" rx="0.7" fill="#eee070"/>
<rect x="900.7" y="598.0" width="2.9" height="2.9" rx="0.7" fill="#6890e8"/>
<rect x="946.3" y="608.0" width="2.9" height="2.9" rx="0.7" fill="#cfe070"/>
<rect x="937.9" y="624.8" width="2.9" height="2.9" rx="0.7" fill="#a0c8f0"/>
<rect x="934.0" y="633.0" width="2.9" height="2.9" rx="0.7" fill="#eee070"/>
<rect x="928.8" y="636.9" width="2.9" height="2.9" rx="0.7" fill="#70d070"/>
<rect x="833.2" y="640.4" width="2.9" height="2.9" rx="0.7" fill="#eee070"/>
<rect x="834.1" y="662.5" width="2.9" height="2.9" rx="0.7" fill="#eee070"/>
<rect x="865.1" y="663.2" width="2.9" height="2.9" rx="0.7" fill="#eee070"/>
<rect x="902.1" y="694.0" width="2.9" height="2.9" rx="0.7" fill="#eee070"/>
<path d="M866.5,589.0L869,591.5L871.5,589.0M869,591.5V594.5" stroke="#2e5a34" stroke-width="0.9" fill="none"/>
<path d="M1027.5,590.5L1030,593L1032.5,590.5M1030,593V596" stroke="#2e5a34" stroke-width="0.9" fill="none"/>
<path d="M1191.5,591.5L1194,594L1196.5,591.5M1194,594V597" stroke="#2e5a34" stroke-width="0.9" fill="none"/>
</g>
<path d="M529.6,789.0L533.2,796.0L536.8000000000001,789.0Z" fill="#d8d8d8" stroke="#7a7a7a" stroke-width="0.5"/>
<rect x="528.7" y="797.0" width="9" height="1.2" fill="#eeeeee"/>
<rect x="516.7" y="789.7" width="11.3" height="9.3" fill="#f2f2f2"/>
<path d="M519.5,799L527.5,791M523,799L527.5,794.5" stroke="#9a9a9a" stroke-width="0.9"/>
</svg></body></html>
